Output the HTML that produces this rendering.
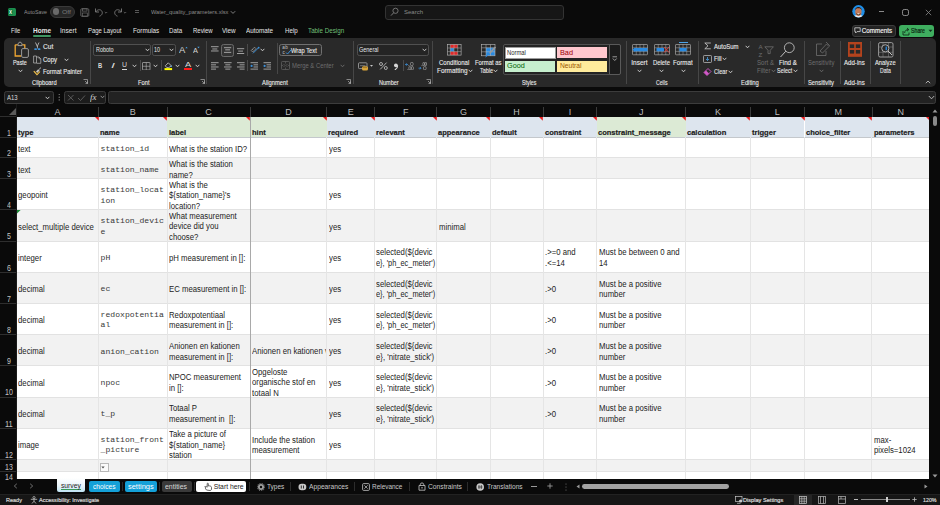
<!DOCTYPE html>
<html><head><meta charset="utf-8"><style>
html,body{margin:0;padding:0;width:940px;height:505px;overflow:hidden;background:#0a0a0a;font-family:"Liberation Sans",sans-serif}
#root{position:relative;width:940px;height:505px;overflow:hidden}
</style></head><body><div id="root">
<div style="position:absolute;left:0px;top:0px;width:940px;height:505px;background:#0a0a0a;"></div><div style="position:absolute;left:8px;top:8px;width:8px;height:8px;background:#1d8f4f;border-radius:1.5px"></div><div style="position:absolute;left:8px;top:9px;width:5px;height:6px;background:#107c41;border-radius:1px"></div><div style="position:absolute;left:50.4px;top:6.2px;width:23px;height:10px;border:0.8px solid #3a3a3a;border-radius:6px;background:#262626"></div><div style="position:absolute;left:53px;top:8.4px;width:6.4px;height:6.4px;border-radius:50%;background:#6a6a6a"></div><svg style="position:absolute;left:80px;top:7.5px;" width="10" height="9" viewBox="0 0 10 9" fill="none"><rect x="0.8" y="0.8" width="8" height="7.4" rx="0.8" stroke="#6e6e6e" stroke-width="0.8"/><rect x="2.6" y="0.8" width="4.4" height="2.3" stroke="#6e6e6e" stroke-width="0.7"/><rect x="2.3" y="5" width="5" height="3.2" stroke="#6e6e6e" stroke-width="0.7"/></svg><svg style="position:absolute;left:94px;top:7px;" width="14" height="10" viewBox="0 0 14 10" fill="none"><path d="M1.5 1.5 V5 H5 M1.8 4.8 C3.2 2.6 6.2 2 7.6 3.8 C9 5.6 8.3 8.2 5.5 9.2" stroke="#7a7a7a" stroke-width="0.9"/><path d="M10.8 5 L12 6.2 L13.2 5" stroke="#7a7a7a" stroke-width="0.7"/></svg><svg style="position:absolute;left:113px;top:7px;" width="14" height="10" viewBox="0 0 14 10" fill="none"><path d="M8.5 1.5 V5 H5 M8.2 4.8 C6.8 2.6 3.8 2 2.4 3.8 C1 5.6 1.7 8.2 4.5 9.2" stroke="#7a7a7a" stroke-width="0.9"/><path d="M10.8 5 L12 6.2 L13.2 5" stroke="#7a7a7a" stroke-width="0.7"/></svg><svg style="position:absolute;left:134px;top:8px;" width="6" height="8" viewBox="0 0 6 8" fill="none"><path d="M1 2.5 H5 M1 4.5 H5" stroke="#7a7a7a" stroke-width="0.7"/></svg><svg style="position:absolute;left:230px;top:10px;" width="6" height="5" viewBox="0 0 6 5" fill="none"><path d="M0.8 1.2 L3 3.4 L5.2 1.2" stroke="#8c8c8c" stroke-width="0.9"/></svg><div style="position:absolute;left:384.5px;top:4.5px;width:177.5px;height:13.5px;border:1px solid #333333;border-radius:3px;background:#161616"></div><svg style="position:absolute;left:390px;top:7px;" width="9" height="10" viewBox="0 0 9 10" fill="none"><circle cx="5.5" cy="3.8" r="2.6" stroke="#7c7c7c" stroke-width="0.9"/><path d="M3.6 5.8 L1 8.6" stroke="#7c7c7c" stroke-width="1"/></svg><svg style="position:absolute;left:851.5px;top:5.2px;" width="13" height="13" viewBox="0 0 13 13" fill="none"><defs><clipPath id="av"><circle cx="6.5" cy="6.3" r="6.2"/></clipPath></defs><g clip-path="url(#av)"><rect width="13" height="13" fill="#1f8ee6"/><ellipse cx="6.4" cy="13" rx="5.5" ry="3.2" fill="#e8ecf0"/><ellipse cx="6.4" cy="6.8" rx="3.2" ry="4.2" fill="#c27a58"/><path d="M3 5.5 C2.8 0.8 10 0.8 9.8 5.5 C9.2 3.6 8.4 3.2 6.4 3.2 C4.4 3.2 3.6 3.6 3 5.5 Z" fill="#2a1a12"/><path d="M4 8 C4.5 11 8.3 11 8.8 8 C8 9.3 4.8 9.3 4 8 Z" fill="#3a2418"/><ellipse cx="6.4" cy="8.8" rx="1.3" ry="0.6" fill="#f0e6e0"/></g></svg><div style="position:absolute;left:878.8px;top:11px;width:5px;height:0.8px;background:#8a8a8a;"></div><div style="position:absolute;left:902px;top:9px;width:4.5px;height:4.5px;border:0.9px solid #8a8a8a;border-radius:2.2px"></div><svg style="position:absolute;left:925px;top:8.5px;" width="7" height="7" viewBox="0 0 7 7" fill="none"><path d="M0.8 0.8 L6.2 6.2 M6.2 0.8 L0.8 6.2" stroke="#8a8a8a" stroke-width="0.8"/></svg><div style="position:absolute;left:33px;top:35.2px;width:18px;height:1.8px;background:#3f9462;border-radius:1px"></div><div style="position:absolute;left:851.5px;top:24.5px;width:42.5px;height:10.5px;border:1px solid #3c3c3c;border-radius:3px;background:#232323"></div><svg style="position:absolute;left:854px;top:27px;" width="7" height="7" viewBox="0 0 7 7" fill="none"><path d="M0.8 0.8 H6.2 V4.6 H3 L1.6 6 V4.6 H0.8 Z" stroke="#d8d8d8" stroke-width="0.8"/></svg><div style="position:absolute;left:899px;top:25px;width:35px;height:11.7px;border-radius:3px;background:#3fae5f"></div><svg style="position:absolute;left:901.5px;top:26.5px;" width="8" height="9" viewBox="0 0 8 9" fill="none"><path d="M1 4 V8 H7 V5.5" stroke="#0c1f12" stroke-width="0.8"/><path d="M2.6 6 C2.8 3.5 4.4 2.6 6.4 2.6 M5 1 L6.8 2.6 L5 4.2" stroke="#0c1f12" stroke-width="0.8"/></svg><svg style="position:absolute;left:928px;top:29px;" width="5" height="4" viewBox="0 0 5 4" fill="none"><path d="M0.5 0.8 L2.5 3 L4.5 0.8 Z" fill="#10301c"/></svg><div style="position:absolute;left:3.7px;top:38px;width:932px;height:48.6px;background:#292929;border-radius:5px"></div><div style="position:absolute;left:89.7px;top:41px;width:0.8px;height:43px;background:#474747;"></div><div style="position:absolute;left:205.6px;top:41px;width:0.8px;height:43px;background:#474747;"></div><div style="position:absolute;left:353.2px;top:41px;width:0.8px;height:43px;background:#474747;"></div><div style="position:absolute;left:432.3px;top:41px;width:0.8px;height:43px;background:#474747;"></div><div style="position:absolute;left:625.5px;top:41px;width:0.8px;height:43px;background:#474747;"></div><div style="position:absolute;left:697.9px;top:41px;width:0.8px;height:43px;background:#474747;"></div><div style="position:absolute;left:803.5px;top:41px;width:0.8px;height:43px;background:#474747;"></div><div style="position:absolute;left:839.8px;top:41px;width:0.8px;height:43px;background:#474747;"></div><div style="position:absolute;left:870.2px;top:41px;width:0.8px;height:43px;background:#474747;"></div><div style="position:absolute;left:900px;top:41px;width:0.8px;height:43px;background:#474747;"></div><svg style="position:absolute;left:13px;top:41px;" width="17" height="18" viewBox="0 0 17 18" fill="none"><path d="M2.2 3.8 H4.8 M9.3 3.8 H11.8 V9 M2.2 3.8 V15 H8" stroke="#f0a732" stroke-width="1.3"/><path d="M5 4.6 V2.5 L7 0.9 L9 2.5 V4.6 Z" stroke="#b8b8b8" stroke-width="0.8"/><rect x="8.6" y="7.6" width="6.8" height="8.8" rx="1.3" fill="#292929" stroke="#9a9a9a" stroke-width="1"/></svg><svg style="position:absolute;left:18.0px;top:68.7px;" width="5" height="4" viewBox="0 0 5 4" fill="none"><path d="M0.9 1.1 L2.5 2.8 L4.1 1.1" stroke="#d8d8d8" stroke-width="0.9" stroke-linejoin="round" stroke-linecap="round"/></svg><svg style="position:absolute;left:33px;top:41.5px;" width="8" height="9" viewBox="0 0 8 9" fill="none"><path d="M2.5 0.5 L4.3 4.5 M6 0.5 L4.2 4.5" stroke="#c8c8c8" stroke-width="0.8"/><rect x="4" y="4" width="0.7" height="2.5" fill="#c8c8c8"/><rect x="1.3" y="6.3" width="2.6" height="1.8" rx="0.5" fill="#3b8fd8"/><rect x="4.8" y="6.3" width="2.6" height="1.8" rx="0.5" fill="#3b8fd8"/></svg><svg style="position:absolute;left:33px;top:54.5px;" width="9" height="9" viewBox="0 0 9 9" fill="none"><path d="M0.6 1 H3.5 V8 H0.6 Z" stroke="#bdbdbd" stroke-width="0.7"/><path d="M3.5 2 H6 L7.8 3.8 V8.3 H3.5" stroke="#bdbdbd" stroke-width="0.7"/><path d="M6 2 V3.8 H7.8" stroke="#bdbdbd" stroke-width="0.5"/></svg><svg style="position:absolute;left:63.900000000000006px;top:57.5px;" width="5" height="4" viewBox="0 0 5 4" fill="none"><path d="M0.9 1.1 L2.5 2.8 L4.1 1.1" stroke="#d8d8d8" stroke-width="0.9" stroke-linejoin="round" stroke-linecap="round"/></svg><svg style="position:absolute;left:33px;top:67px;" width="9" height="9" viewBox="0 0 9 9" fill="none"><path d="M0.8 4.2 L4 7.8 L7 4.5" stroke="#f2c14e" stroke-width="1.1" fill="#5a4a20"/><path d="M3 4.5 L5.2 2.2 L6.6 3.6 L4.4 5.8 Z" fill="#c8c8c8"/><path d="M5.8 2.6 L8 0.6" stroke="#c8c8c8" stroke-width="0.9"/></svg><svg style="position:absolute;left:83.0px;top:79.0px;" width="5" height="5" viewBox="0 0 5 5" fill="none"><path d="M0.5 0.5 H4.5 V4.5 M2 2 L4.5 4.5 M4.5 2.5 V4.5 H2.5" stroke="#b0b0b0" stroke-width="0.7"/></svg><div style="position:absolute;left:93.3px;top:44.4px;width:55.8px;height:9.5px;border:0.8px solid #505050;border-radius:2.2px;background:#242424"></div><svg style="position:absolute;left:144.5px;top:48px;" width="5" height="4" viewBox="0 0 5 4" fill="none"><path d="M0.9 1.1 L2.5 2.8 L4.1 1.1" stroke="#d8d8d8" stroke-width="0.9" stroke-linejoin="round" stroke-linecap="round"/></svg><div style="position:absolute;left:152px;top:44.4px;width:21.8px;height:9.5px;border:0.8px solid #505050;border-radius:2.2px;background:#242424"></div><svg style="position:absolute;left:169.3px;top:48px;" width="5" height="4" viewBox="0 0 5 4" fill="none"><path d="M0.9 1.1 L2.5 2.8 L4.1 1.1" stroke="#d8d8d8" stroke-width="0.9" stroke-linejoin="round" stroke-linecap="round"/></svg><svg style="position:absolute;left:184.8px;top:45.5px;" width="3" height="3" viewBox="0 0 3 3" fill="none"><path d="M0.3 2.2 L1.5 0.8 L2.7 2.2 Z" fill="#4aa3e8"/></svg><svg style="position:absolute;left:197.2px;top:45.8px;" width="3" height="3" viewBox="0 0 3 3" fill="none"><path d="M0.3 0.8 L1.5 2.2 L2.7 0.8 Z" fill="#4aa3e8"/></svg><div style="position:absolute;left:122px;top:68.8px;width:5px;height:0.7px;background:#d8d8d8;"></div><svg style="position:absolute;left:132.0px;top:63.5px;" width="5" height="4" viewBox="0 0 5 4" fill="none"><path d="M0.9 1.1 L2.5 2.8 L4.1 1.1" stroke="#d8d8d8" stroke-width="0.9" stroke-linejoin="round" stroke-linecap="round"/></svg><div style="position:absolute;left:139.6px;top:60px;width:0.7px;height:11px;background:#4a4a4a;"></div><svg style="position:absolute;left:142px;top:61.5px;" width="8.5" height="8.5" viewBox="0 0 8.5 8.5" fill="none"><rect x="0.5" y="0.5" width="7.5" height="7.5" rx="0.5" stroke="#b8b8b8" stroke-width="0.7"/><path d="M4.25 0.5 V8 M0.5 4.25 H8" stroke="#b8b8b8" stroke-width="0.6"/></svg><div style="position:absolute;left:161.3px;top:60px;width:0.7px;height:11px;background:#4a4a4a;"></div><svg style="position:absolute;left:152.5px;top:63.5px;" width="5" height="4" viewBox="0 0 5 4" fill="none"><path d="M0.9 1.1 L2.5 2.8 L4.1 1.1" stroke="#d8d8d8" stroke-width="0.9" stroke-linejoin="round" stroke-linecap="round"/></svg><svg style="position:absolute;left:164px;top:60.5px;" width="9" height="10" viewBox="0 0 9 10" fill="none"><path d="M1.3 4.8 L4.3 1.8 L7.3 4.8 L4.8 6.6 H2.8 Z" stroke="#d0d0d0" stroke-width="0.8"/><path d="M7 4.5 L7.8 6" stroke="#4aa3e8" stroke-width="0.9"/><rect x="0.5" y="7.1" width="7.6" height="2" fill="#ffff00"/></svg><svg style="position:absolute;left:174.5px;top:63.5px;" width="5" height="4" viewBox="0 0 5 4" fill="none"><path d="M0.9 1.1 L2.5 2.8 L4.1 1.1" stroke="#d8d8d8" stroke-width="0.9" stroke-linejoin="round" stroke-linecap="round"/></svg><div style="position:absolute;left:184px;top:67.6px;width:8px;height:2.1px;background:#ff1a1a;"></div><svg style="position:absolute;left:194.6px;top:63.5px;" width="5" height="4" viewBox="0 0 5 4" fill="none"><path d="M0.9 1.1 L2.5 2.8 L4.1 1.1" stroke="#d8d8d8" stroke-width="0.9" stroke-linejoin="round" stroke-linecap="round"/></svg><svg style="position:absolute;left:200.0px;top:79.0px;" width="5" height="5" viewBox="0 0 5 5" fill="none"><path d="M0.5 0.5 H4.5 V4.5 M2 2 L4.5 4.5 M4.5 2.5 V4.5 H2.5" stroke="#b0b0b0" stroke-width="0.7"/></svg><svg style="position:absolute;left:211px;top:45.5px;" width="8" height="6" viewBox="0 0 8 6" fill="none"><rect x="0" y="0.4" width="7.6" height="0.75" fill="#c8c8c8"/><rect x="1.3" y="2.6" width="5" height="0.75" fill="#c8c8c8"/><rect x="0" y="4.6" width="7.6" height="0.75" fill="#c8c8c8"/></svg><div style="position:absolute;left:221.2px;top:44px;width:11.3px;height:10.8px;border:0.9px solid #6a6a6a;border-radius:2.5px;background:#333333"></div><svg style="position:absolute;left:224px;top:46.5px;" width="8" height="6" viewBox="0 0 8 6" fill="none"><rect x="0" y="0.4" width="7.2" height="0.75" fill="#c8c8c8"/><rect x="1.2" y="2.5" width="4.8" height="0.75" fill="#c8c8c8"/><rect x="0" y="4.9" width="7.2" height="0.75" fill="#c8c8c8"/></svg><svg style="position:absolute;left:237px;top:48.3px;" width="8" height="6" viewBox="0 0 8 6" fill="none"><rect x="0" y="0.4" width="7.2" height="0.75" fill="#c8c8c8"/><rect x="1.2" y="2.7" width="4.8" height="0.75" fill="#c8c8c8"/><rect x="0" y="5.1" width="7.2" height="0.75" fill="#c8c8c8"/></svg><div style="position:absolute;left:247.2px;top:44px;width:0.7px;height:11.6px;background:#4a4a4a;"></div><svg style="position:absolute;left:250px;top:45px;" width="10" height="9" viewBox="0 0 10 9" fill="none"><path d="M1.2 5.5 L4.5 2.2 L6 3.7 L2.7 7 Z M2.2 4.2 L3.2 5.2" stroke="#a8a8a8" stroke-width="0.7"/><path d="M3 8.3 L8.8 2.5" stroke="#3b8fd8" stroke-width="1"/><circle cx="8.6" cy="2.7" r="0.9" fill="#3b8fd8"/></svg><svg style="position:absolute;left:259.8px;top:48px;" width="5" height="4" viewBox="0 0 5 4" fill="none"><path d="M0.9 1.1 L2.5 2.8 L4.1 1.1" stroke="#d8d8d8" stroke-width="0.9" stroke-linejoin="round" stroke-linecap="round"/></svg><svg style="position:absolute;left:211px;top:61.5px;" width="8" height="8" viewBox="0 0 8 8" fill="none"><rect x="0" y="0.4" width="7.6" height="0.75" fill="#c8c8c8"/><rect x="0" y="2.5" width="5" height="0.75" fill="#c8c8c8"/><rect x="0" y="4.6" width="7.6" height="0.75" fill="#c8c8c8"/><rect x="0" y="6.7" width="5" height="0.75" fill="#c8c8c8"/></svg><svg style="position:absolute;left:224px;top:61.5px;" width="8" height="8" viewBox="0 0 8 8" fill="none"><rect x="0" y="0.4" width="7.6" height="0.75" fill="#c8c8c8"/><rect x="1.3" y="2.5" width="5" height="0.75" fill="#c8c8c8"/><rect x="0" y="4.6" width="7.6" height="0.75" fill="#c8c8c8"/><rect x="1.3" y="6.7" width="5" height="0.75" fill="#c8c8c8"/></svg><svg style="position:absolute;left:237px;top:61.5px;" width="8" height="8" viewBox="0 0 8 8" fill="none"><rect x="0" y="0.4" width="7.6" height="0.75" fill="#c8c8c8"/><rect x="2.6" y="2.5" width="5" height="0.75" fill="#c8c8c8"/><rect x="0" y="4.6" width="7.6" height="0.75" fill="#c8c8c8"/><rect x="2.6" y="6.7" width="5" height="0.75" fill="#c8c8c8"/></svg><div style="position:absolute;left:247.2px;top:59.6px;width:0.7px;height:11.6px;background:#4a4a4a;"></div><svg style="position:absolute;left:250px;top:61.5px;" width="9" height="8" viewBox="0 0 9 8" fill="none"><rect x="0.5" y="0.4" width="7.5" height="0.75" fill="#c8c8c8"/><rect x="3.5" y="2.5" width="4.5" height="0.75" fill="#c8c8c8"/><rect x="3.5" y="4.6" width="4.5" height="0.75" fill="#c8c8c8"/><rect x="0.5" y="6.7" width="7.5" height="0.75" fill="#c8c8c8"/><circle cx="1.6" cy="3.9" r="1.1" fill="#3b8fd8"/></svg><svg style="position:absolute;left:263px;top:61.5px;" width="9" height="8" viewBox="0 0 9 8" fill="none"><rect x="0.5" y="0.4" width="7.5" height="0.75" fill="#c8c8c8"/><rect x="3.5" y="2.5" width="4.5" height="0.75" fill="#c8c8c8"/><rect x="3.5" y="4.6" width="4.5" height="0.75" fill="#c8c8c8"/><rect x="0.5" y="6.7" width="7.5" height="0.75" fill="#c8c8c8"/><circle cx="1.6" cy="3.9" r="1.1" fill="#3b8fd8"/></svg><div style="position:absolute;left:276.6px;top:43.4px;width:0.7px;height:30.2px;background:#474747;"></div><div style="position:absolute;left:279.1px;top:44.4px;width:40.5px;height:9.8px;border:0.8px solid #707070;border-radius:2.5px;background:#2e2e2e"></div><svg style="position:absolute;left:281.5px;top:45px;" width="10" height="10" viewBox="0 0 10 10" fill="none"><text x="0.3" y="4.3" font-family="Liberation Sans" font-size="4.6" fill="#c8c8c8">a</text><text x="3.3" y="4.3" font-family="Liberation Sans" font-size="4.6" fill="#c8c8c8">b</text><text x="0.5" y="8.8" font-family="Liberation Sans" font-size="4.6" fill="#c8c8c8">c</text><path d="M4 7.5 L5.5 9 L9 5" stroke="#3b8fd8" stroke-width="1"/></svg><svg style="position:absolute;left:280.5px;top:61px;" width="9" height="9" viewBox="0 0 9 9" fill="none"><rect x="0.5" y="0.5" width="8" height="8" rx="0.8" stroke="#5e5e5e" stroke-width="0.8"/><path d="M4.5 0.5 V2.5 M4.5 6.5 V8.5 M0.5 4.5 H2 M7 4.5 H8.5 M2.5 3 L4 4.5 L2.5 6 M6.5 3 L5 4.5 L6.5 6" stroke="#5e5e5e" stroke-width="0.7"/></svg><svg style="position:absolute;left:339.6px;top:63.8px;" width="5" height="4" viewBox="0 0 5 4" fill="none"><path d="M0.9 1.1 L2.5 2.8 L4.1 1.1" stroke="#6e6e6e" stroke-width="0.9" stroke-linejoin="round" stroke-linecap="round"/></svg><svg style="position:absolute;left:345.6px;top:79.0px;" width="5" height="5" viewBox="0 0 5 5" fill="none"><path d="M0.5 0.5 H4.5 V4.5 M2 2 L4.5 4.5 M4.5 2.5 V4.5 H2.5" stroke="#b0b0b0" stroke-width="0.7"/></svg><div style="position:absolute;left:356.6px;top:44.4px;width:70.2px;height:9.8px;border:0.8px solid #505050;border-radius:2.2px;background:#242424"></div><svg style="position:absolute;left:422.0px;top:48px;" width="5" height="4" viewBox="0 0 5 4" fill="none"><path d="M0.9 1.1 L2.5 2.8 L4.1 1.1" stroke="#d8d8d8" stroke-width="0.9" stroke-linejoin="round" stroke-linecap="round"/></svg><svg style="position:absolute;left:357.5px;top:61.5px;" width="11" height="9" viewBox="0 0 11 9" fill="none"><rect x="0.5" y="0.8" width="8.5" height="5.8" rx="0.8" stroke="#a8a8a8" stroke-width="0.8"/><path d="M2 3.7 H7.5" stroke="#a8a8a8" stroke-width="0.6"/><rect x="4" y="4.2" width="6" height="4.2" rx="1.5" fill="#d9a53a"/><path d="M5 5.6 H9" stroke="#6a4a10" stroke-width="0.5"/></svg><svg style="position:absolute;left:370.4px;top:65px;" width="3" height="2" viewBox="0 0 3 2" fill="none"><path d="M0 0 H3 L1.5 1.8 Z" fill="#c8c8c8"/></svg><svg style="position:absolute;left:378.5px;top:61.8px;" width="9" height="8" viewBox="0 0 9 8" fill="none"><circle cx="2" cy="2" r="1.5" stroke="#b8b8b8" stroke-width="0.9"/><circle cx="6.8" cy="6" r="1.5" stroke="#b8b8b8" stroke-width="0.9"/><path d="M7.6 0.6 L1.2 7.4" stroke="#b8b8b8" stroke-width="0.9"/></svg><svg style="position:absolute;left:393px;top:62.5px;" width="6" height="7" viewBox="0 0 6 7" fill="none"><circle cx="2.9" cy="2.3" r="1.9" fill="#d8d8d8"/><path d="M4.6 2.5 C4.7 4.6 3.8 6 1.8 6.8" stroke="#d8d8d8" stroke-width="1.1"/></svg><div style="position:absolute;left:402.9px;top:59.8px;width:0.7px;height:11.5px;background:#4a4a4a;"></div><svg style="position:absolute;left:405.3px;top:61.8px;" width="9" height="8.5" viewBox="0 0 9 8.5" fill="none"><path d="M0.5 2.5 H3 M1.6 1.3 L0.5 2.5 L1.6 3.7" stroke="#3b8fd8" stroke-width="0.8"/><rect x="3.5" y="3.3" width="0.8" height="0.8" fill="#b8b8b8"/><rect x="5.5" y="0.4" width="2.6" height="3.2" rx="1" stroke="#b8b8b8" stroke-width="0.6"/><rect x="2.6" y="7" width="0.8" height="0.8" fill="#b8b8b8"/><rect x="3.9" y="4.6" width="2" height="3.2" rx="0.9" stroke="#b8b8b8" stroke-width="0.6"/><rect x="6.4" y="4.6" width="2" height="3.2" rx="0.9" stroke="#b8b8b8" stroke-width="0.6"/></svg><svg style="position:absolute;left:418.2px;top:61.8px;" width="9" height="8.5" viewBox="0 0 9 8.5" fill="none"><path d="M0.5 6.2 H3 M1.9 5 L3 6.2 L1.9 7.4" stroke="#3b8fd8" stroke-width="0.8"/><rect x="3.6" y="3.3" width="0.8" height="0.8" fill="#b8b8b8"/><rect x="4.9" y="0.4" width="1.6" height="3.2" rx="0.7" stroke="#b8b8b8" stroke-width="0.6"/><rect x="6.9" y="0.4" width="1.6" height="3.2" rx="0.7" stroke="#b8b8b8" stroke-width="0.6"/><rect x="5.5" y="4.6" width="2.6" height="3.2" rx="1" stroke="#b8b8b8" stroke-width="0.6"/></svg><svg style="position:absolute;left:425.6px;top:79.0px;" width="5" height="5" viewBox="0 0 5 5" fill="none"><path d="M0.5 0.5 H4.5 V4.5 M2 2 L4.5 4.5 M4.5 2.5 V4.5 H2.5" stroke="#b0b0b0" stroke-width="0.7"/></svg><svg style="position:absolute;left:446.8px;top:44px;" width="15" height="12" viewBox="0 0 15 12" fill="none"><rect x="3.3" y="0.5" width="7.4" height="3.4" fill="#e02828"/><rect x="3.3" y="4.1" width="3.6" height="3.4" fill="#2a8ae0"/><rect x="3.3" y="7.7" width="7.4" height="3.4" fill="#e02828"/><rect x="0.5" y="0.5" width="13.6" height="10.6" stroke="#bdbdbd" stroke-width="0.6"/><path d="M3.3 0.5 V11.1 M7 0.5 V11.1 M10.7 0.5 V11.1 M0.5 4 H14.1 M0.5 7.6 H14.1" stroke="#bdbdbd" stroke-width="0.45"/></svg><svg style="position:absolute;left:467.7px;top:68.8px;" width="5" height="4" viewBox="0 0 5 4" fill="none"><path d="M0.9 1.1 L2.5 2.8 L4.1 1.1" stroke="#d8d8d8" stroke-width="0.9" stroke-linejoin="round" stroke-linecap="round"/></svg><svg style="position:absolute;left:480.5px;top:43.5px;" width="16" height="15" viewBox="0 0 16 15" fill="none"><rect x="5" y="3.7" width="9" height="8" fill="#2a8ae0"/><rect x="0.5" y="0.5" width="13.5" height="11.3" stroke="#bdbdbd" stroke-width="0.6"/><path d="M5 0.5 V11.8 M9.5 0.5 V11.8 M0.5 3.8 H14 M0.5 7.8 H14" stroke="#bdbdbd" stroke-width="0.5"/><path d="M14.5 3 L8.5 9.5" stroke="#9a9a9a" stroke-width="1.6"/><path d="M8.8 9.2 L6 12.2 L4 13.8 L5.4 11.3 L8 8.6 Z" fill="#2a8ae0"/></svg><svg style="position:absolute;left:493.0px;top:68.8px;" width="5" height="4" viewBox="0 0 5 4" fill="none"><path d="M0.9 1.1 L2.5 2.8 L4.1 1.1" stroke="#d8d8d8" stroke-width="0.9" stroke-linejoin="round" stroke-linecap="round"/></svg><div style="position:absolute;left:503px;top:44.4px;width:116.4px;height:28.8px;border:0.9px solid #505050;border-radius:2px;background:#232323"></div><div style="position:absolute;left:505.2px;top:46.6px;width:48.5px;height:10.4px;background:#ffffff;border:0.6px solid #9c9c9c"></div><div style="position:absolute;left:557.4px;top:46.6px;width:49.4px;height:11px;background:#ffc7ce"></div><div style="position:absolute;left:505.2px;top:60.5px;width:49.7px;height:11px;background:#c6efce"></div><div style="position:absolute;left:557.4px;top:60.5px;width:49.4px;height:11px;background:#ffeb9c"></div><div style="position:absolute;left:608.5px;top:44.4px;width:10.9px;height:28.8px;border:0.9px solid #5a5a5a;border-radius:0 2px 2px 0;background:#1c1c1c"></div><svg style="position:absolute;left:611.5px;top:56px;" width="6" height="6" viewBox="0 0 6 6" fill="none"><path d="M0.5 0.8 H5 M0.8 2.5 L2.75 4.5 L4.7 2.5" stroke="#d0d0d0" stroke-width="0.7"/></svg><svg style="position:absolute;left:632px;top:44px;" width="16" height="12" viewBox="0 0 16 12" fill="none"><rect x="0.5" y="0.5" width="15" height="10.3" rx="0.6" stroke="#bdbdbd" stroke-width="0.6"/><path d="M4.25 0.5 V10.8 M8 0.5 V10.8 M11.75 0.5 V10.8 M0.5 3.8 H15.5 M0.5 7.4 H15.5" stroke="#bdbdbd" stroke-width="0.45"/><rect x="2.5" y="4" width="13" height="3.3" fill="#2a8ae0"/><path d="M0.3 5.65 L3 3.4 V7.9 Z" fill="#2a8ae0"/></svg><svg style="position:absolute;left:637.0px;top:68.7px;" width="5" height="4" viewBox="0 0 5 4" fill="none"><path d="M0.9 1.1 L2.5 2.8 L4.1 1.1" stroke="#d8d8d8" stroke-width="0.9" stroke-linejoin="round" stroke-linecap="round"/></svg><svg style="position:absolute;left:653.5px;top:44px;" width="16" height="12" viewBox="0 0 16 12" fill="none"><rect x="0.5" y="0.5" width="15" height="10.3" rx="0.6" stroke="#bdbdbd" stroke-width="0.6"/><path d="M4.25 0.5 V10.8 M8 0.5 V10.8 M11.75 0.5 V10.8 M0.5 3.8 H15.5 M0.5 7.4 H15.5" stroke="#bdbdbd" stroke-width="0.45"/><rect x="2.5" y="4" width="7.5" height="3.3" fill="#2a8ae0"/><path d="M10 3 L15 8.6 M15 3 L10 8.6" stroke="#e03c3c" stroke-width="0.9"/></svg><svg style="position:absolute;left:658.8px;top:68.7px;" width="5" height="4" viewBox="0 0 5 4" fill="none"><path d="M0.9 1.1 L2.5 2.8 L4.1 1.1" stroke="#d8d8d8" stroke-width="0.9" stroke-linejoin="round" stroke-linecap="round"/></svg><svg style="position:absolute;left:675px;top:44px;" width="16" height="12" viewBox="0 0 16 12" fill="none"><rect x="0.5" y="0.5" width="15" height="10.3" rx="0.6" stroke="#bdbdbd" stroke-width="0.6"/><path d="M4.25 0.5 V10.8 M8 0.5 V10.8 M11.75 0.5 V10.8 M0.5 3.8 H15.5 M0.5 7.4 H15.5" stroke="#bdbdbd" stroke-width="0.45"/><rect x="4.4" y="4" width="7.2" height="3.3" fill="#2a8ae0"/></svg><div style="position:absolute;left:679px;top:42px;width:9px;height:0.8px;background:#4aa3e8;"></div><svg style="position:absolute;left:680.5px;top:68.7px;" width="5" height="4" viewBox="0 0 5 4" fill="none"><path d="M0.9 1.1 L2.5 2.8 L4.1 1.1" stroke="#d8d8d8" stroke-width="0.9" stroke-linejoin="round" stroke-linecap="round"/></svg><svg style="position:absolute;left:703.5px;top:42px;" width="8" height="8" viewBox="0 0 8 8" fill="none"><path d="M6.8 1 H0.8 L4 3.8 L0.8 6.8 H6.8" stroke="#d0d0d0" stroke-width="0.8" stroke-linejoin="miter"/></svg><svg style="position:absolute;left:745.1px;top:44.8px;" width="5" height="4" viewBox="0 0 5 4" fill="none"><path d="M0.9 1.1 L2.5 2.8 L4.1 1.1" stroke="#d8d8d8" stroke-width="0.9" stroke-linejoin="round" stroke-linecap="round"/></svg><svg style="position:absolute;left:703px;top:54.8px;" width="9" height="8" viewBox="0 0 9 8" fill="none"><rect x="0.5" y="0.5" width="8" height="7" rx="0.8" stroke="#c8c8c8" stroke-width="0.7"/><path d="M4.5 2 V5.5 M3 4 L4.5 5.5 L6 4" stroke="#4aa3e8" stroke-width="0.8"/></svg><svg style="position:absolute;left:721.8px;top:57px;" width="5" height="4" viewBox="0 0 5 4" fill="none"><path d="M0.9 1.1 L2.5 2.8 L4.1 1.1" stroke="#d8d8d8" stroke-width="0.9" stroke-linejoin="round" stroke-linecap="round"/></svg><svg style="position:absolute;left:703px;top:67px;" width="9" height="9" viewBox="0 0 9 9" fill="none"><path d="M1 5.5 L5 1.5 L8 4.5 L4 8.5 Z" stroke="#d259c8" stroke-width="0.9"/><path d="M1 5.5 L3 3.5 L6 6.5 L4 8.5 Z" fill="#d259c8"/></svg><svg style="position:absolute;left:727.8px;top:69.5px;" width="5" height="4" viewBox="0 0 5 4" fill="none"><path d="M0.9 1.1 L2.5 2.8 L4.1 1.1" stroke="#d8d8d8" stroke-width="0.9" stroke-linejoin="round" stroke-linecap="round"/></svg><svg style="position:absolute;left:757.5px;top:42.5px;" width="17" height="15" viewBox="0 0 17 15" fill="none"><text x="0.6" y="6" font-family="Liberation Sans" font-size="6.2" fill="#6e6e6e">A</text><text x="0.6" y="13.5" font-family="Liberation Sans" font-size="6.2" fill="#6e6e6e">Z</text><path d="M6.8 3.8 H15.4 L12.2 7.3 V10.6 H10 V7.3 Z" stroke="#6e6e6e" stroke-width="0.8"/></svg><svg style="position:absolute;left:770.5px;top:68.8px;" width="5" height="4" viewBox="0 0 5 4" fill="none"><path d="M0.9 1.1 L2.5 2.8 L4.1 1.1" stroke="#6e6e6e" stroke-width="0.9" stroke-linejoin="round" stroke-linecap="round"/></svg><svg style="position:absolute;left:779px;top:41.5px;" width="17" height="16" viewBox="0 0 17 16" fill="none"><circle cx="10.3" cy="5.7" r="4.9" stroke="#d0d0d0" stroke-width="0.8"/><path d="M6.8 9.2 L1.5 15" stroke="#d0d0d0" stroke-width="0.9"/></svg><svg style="position:absolute;left:793.3px;top:68.8px;" width="5" height="4" viewBox="0 0 5 4" fill="none"><path d="M0.9 1.1 L2.5 2.8 L4.1 1.1" stroke="#d8d8d8" stroke-width="0.9" stroke-linejoin="round" stroke-linecap="round"/></svg><svg style="position:absolute;left:814.5px;top:41.2px;" width="16" height="16" viewBox="0 0 16 16" fill="none"><path d="M1.5 3 H7 M1.5 3 V14.5 H11 V10" stroke="#6e6e6e" stroke-width="0.8"/><path d="M5 10 L11.5 3 L14 5.5 L7.5 12 Z" stroke="#6e6e6e" stroke-width="0.8"/><path d="M11 1 L14.8 4.8" stroke="#6e6e6e" stroke-width="0.8"/></svg><svg style="position:absolute;left:818.8px;top:68.7px;" width="5" height="4" viewBox="0 0 5 4" fill="none"><path d="M0.9 1.1 L2.5 2.8 L4.1 1.1" stroke="#6e6e6e" stroke-width="0.9" stroke-linejoin="round" stroke-linecap="round"/></svg><svg style="position:absolute;left:848px;top:42px;" width="14" height="15" viewBox="0 0 14 15" fill="none"><rect x="0" y="0" width="14" height="14.6" fill="#b4431d"/><rect x="1.8" y="2.4" width="4.4" height="3.6" fill="#292929"/><rect x="7.8" y="2.4" width="4.4" height="3.6" fill="#292929"/><rect x="1.8" y="8" width="4.4" height="3.6" fill="#292929"/><rect x="7.8" y="8" width="4.4" height="3.6" fill="#292929"/><rect x="0" y="13" width="14" height="1.6" fill="#b4431d"/></svg><svg style="position:absolute;left:877.5px;top:41.5px;" width="16" height="16" viewBox="0 0 16 16" fill="none"><rect x="0.6" y="0.6" width="14.4" height="14.4" rx="1.5" stroke="#a8a8a8" stroke-width="0.9"/><path d="M0.6 5 H15 M0.6 10.3 H15 M5 0.6 V15 M10.5 0.6 V15" stroke="#8a8a8a" stroke-width="0.5"/><circle cx="7.3" cy="6.3" r="3.6" fill="#292929" stroke="#c8c8c8" stroke-width="0.8"/><rect x="7.6" y="4.6" width="1.3" height="3.6" fill="#2a8ae0"/><path d="M10 9 L14 13" stroke="#c8c8c8" stroke-width="1"/></svg><svg style="position:absolute;left:924.5px;top:80px;" width="6" height="4" viewBox="0 0 6 4" fill="none"><path d="M0.8 3.2 L3 1 L5.2 3.2" stroke="#d0d0d0" stroke-width="0.8"/></svg><div style="position:absolute;left:4.2px;top:91px;width:47.5px;height:10.8px;border:0.9px solid #3c3c3c;border-radius:2.5px;background:#1c1c1c"></div><svg style="position:absolute;left:45.0px;top:95.5px;" width="5" height="4" viewBox="0 0 5 4" fill="none"><path d="M0.9 1.1 L2.5 2.8 L4.1 1.1" stroke="#c8c8c8" stroke-width="0.9900000000000001" stroke-linejoin="round" stroke-linecap="round"/></svg><svg style="position:absolute;left:57.5px;top:93px;" width="3" height="9" viewBox="0 0 3 9" fill="none"><circle cx="1.2" cy="1.5" r="0.6" fill="#9a9a9a"/><circle cx="1.2" cy="4.2" r="0.6" fill="#9a9a9a"/><circle cx="1.2" cy="6.9" r="0.6" fill="#9a9a9a"/></svg><div style="position:absolute;left:64px;top:91px;width:39.6px;height:10.8px;border:0.9px solid #3c3c3c;border-radius:2.5px;background:#1c1c1c"></div><svg style="position:absolute;left:66.5px;top:93.5px;" width="8" height="8" viewBox="0 0 8 8" fill="none"><path d="M1 1 L6.5 6.5 M6.5 1 L1 6.5" stroke="#6a6a6a" stroke-width="0.8"/></svg><svg style="position:absolute;left:76.5px;top:93.5px;" width="9" height="8" viewBox="0 0 9 8" fill="none"><path d="M1 4 L3.5 6.5 L8 1.5" stroke="#6a6a6a" stroke-width="0.8"/></svg><svg style="position:absolute;left:99.5px;top:95.3px;" width="5" height="4" viewBox="0 0 5 4" fill="none"><path d="M0.9 1.1 L2.5 2.8 L4.1 1.1" stroke="#9a9a9a" stroke-width="0.9" stroke-linejoin="round" stroke-linecap="round"/></svg><div style="position:absolute;left:108px;top:91px;width:825.6px;height:10.8px;border:0.9px solid #3c3c3c;border-radius:2.5px;background:#222222"></div><svg style="position:absolute;left:927.5px;top:94.5px;" width="7" height="5" viewBox="0 0 7 5" fill="none"><path d="M0.8 1 L3.5 3.8 L6.2 1" stroke="#c0c0c0" stroke-width="0.9"/></svg><svg style="position:absolute;left:7.5px;top:107px;" width="9" height="9" viewBox="0 0 9 9" fill="none"><path d="M8 1 V8 H1 Z" fill="#5a5a5a"/></svg><div style="position:absolute;left:98.0px;top:107px;width:0.8px;height:9.5px;background:#3a3a3a;"></div><div style="position:absolute;left:166.6px;top:107px;width:0.8px;height:9.5px;background:#3a3a3a;"></div><div style="position:absolute;left:249.79999999999998px;top:107px;width:0.8px;height:9.5px;background:#3a3a3a;"></div><div style="position:absolute;left:326.40000000000003px;top:107px;width:0.8px;height:9.5px;background:#3a3a3a;"></div><div style="position:absolute;left:374.20000000000005px;top:107px;width:0.8px;height:9.5px;background:#3a3a3a;"></div><div style="position:absolute;left:436.40000000000003px;top:107px;width:0.8px;height:9.5px;background:#3a3a3a;"></div><div style="position:absolute;left:489.8px;top:107px;width:0.8px;height:9.5px;background:#3a3a3a;"></div><div style="position:absolute;left:542.6px;top:107px;width:0.8px;height:9.5px;background:#3a3a3a;"></div><div style="position:absolute;left:596.4px;top:107px;width:0.8px;height:9.5px;background:#3a3a3a;"></div><div style="position:absolute;left:685.4px;top:107px;width:0.8px;height:9.5px;background:#3a3a3a;"></div><div style="position:absolute;left:749.8000000000001px;top:107px;width:0.8px;height:9.5px;background:#3a3a3a;"></div><div style="position:absolute;left:804.1px;top:107px;width:0.8px;height:9.5px;background:#3a3a3a;"></div><div style="position:absolute;left:871.5px;top:107px;width:0.8px;height:9.5px;background:#3a3a3a;"></div><div style="position:absolute;left:929.0px;top:107px;width:0.8px;height:9.5px;background:#3a3a3a;"></div><div style="position:absolute;left:16.5px;top:116.5px;width:912.9px;height:362.3px;background:#ffffff;"></div><div style="position:absolute;left:16.5px;top:157.9px;width:912.9px;height:20.69999999999999px;background:#f2f2f2;"></div><div style="position:absolute;left:16.5px;top:209.79999999999998px;width:912.9px;height:31.200000000000017px;background:#f2f2f2;"></div><div style="position:absolute;left:16.5px;top:272.2px;width:912.9px;height:31.19999999999999px;background:#f2f2f2;"></div><div style="position:absolute;left:16.5px;top:334.6px;width:912.9px;height:31.199999999999932px;background:#f2f2f2;"></div><div style="position:absolute;left:16.5px;top:397.0px;width:912.9px;height:31.19999999999999px;background:#f2f2f2;"></div><div style="position:absolute;left:16.5px;top:459.4px;width:912.9px;height:11.800000000000011px;background:#f2f2f2;"></div><div style="position:absolute;left:16.5px;top:116.5px;width:81.9px;height:20.80000000000001px;background:#dde5ee;"></div><div style="position:absolute;left:98.4px;top:116.5px;width:68.6px;height:20.80000000000001px;background:#dde5ee;"></div><div style="position:absolute;left:167px;top:116.5px;width:83.19999999999999px;height:20.80000000000001px;background:#dcead5;"></div><div style="position:absolute;left:250.2px;top:116.5px;width:76.60000000000002px;height:20.80000000000001px;background:#dcead5;"></div><div style="position:absolute;left:326.8px;top:116.5px;width:47.80000000000001px;height:20.80000000000001px;background:#dde5ee;"></div><div style="position:absolute;left:374.6px;top:116.5px;width:62.19999999999999px;height:20.80000000000001px;background:#dde5ee;"></div><div style="position:absolute;left:436.8px;top:116.5px;width:53.39999999999998px;height:20.80000000000001px;background:#dde5ee;"></div><div style="position:absolute;left:490.2px;top:116.5px;width:52.80000000000001px;height:20.80000000000001px;background:#dde5ee;"></div><div style="position:absolute;left:543px;top:116.5px;width:53.799999999999955px;height:20.80000000000001px;background:#dde5ee;"></div><div style="position:absolute;left:596.8px;top:116.5px;width:89.0px;height:20.80000000000001px;background:#dcead5;"></div><div style="position:absolute;left:685.8px;top:116.5px;width:64.40000000000009px;height:20.80000000000001px;background:#dde5ee;"></div><div style="position:absolute;left:750.2px;top:116.5px;width:54.299999999999955px;height:20.80000000000001px;background:#dde5ee;"></div><div style="position:absolute;left:804.5px;top:116.5px;width:67.39999999999998px;height:20.80000000000001px;background:#dde5ee;"></div><div style="position:absolute;left:871.9px;top:116.5px;width:57.5px;height:20.80000000000001px;background:#dde5ee;"></div><div style="position:absolute;left:16.5px;top:136.9px;width:912.9px;height:1px;background:#c4c8cc;"></div><div style="position:absolute;left:16.5px;top:157.4px;width:912.9px;height:1px;background:#e2e2e2;"></div><div style="position:absolute;left:16.5px;top:178.1px;width:912.9px;height:1px;background:#e2e2e2;"></div><div style="position:absolute;left:16.5px;top:209.29999999999998px;width:912.9px;height:1px;background:#e2e2e2;"></div><div style="position:absolute;left:16.5px;top:240.5px;width:912.9px;height:1px;background:#e2e2e2;"></div><div style="position:absolute;left:16.5px;top:271.7px;width:912.9px;height:1px;background:#e2e2e2;"></div><div style="position:absolute;left:16.5px;top:302.9px;width:912.9px;height:1px;background:#e2e2e2;"></div><div style="position:absolute;left:16.5px;top:334.1px;width:912.9px;height:1px;background:#e2e2e2;"></div><div style="position:absolute;left:16.5px;top:365.29999999999995px;width:912.9px;height:1px;background:#e2e2e2;"></div><div style="position:absolute;left:16.5px;top:396.5px;width:912.9px;height:1px;background:#e2e2e2;"></div><div style="position:absolute;left:16.5px;top:427.7px;width:912.9px;height:1px;background:#e2e2e2;"></div><div style="position:absolute;left:16.5px;top:458.9px;width:912.9px;height:1px;background:#e2e2e2;"></div><div style="position:absolute;left:16.5px;top:470.7px;width:912.9px;height:1px;background:#e2e2e2;"></div><div style="position:absolute;left:97.9px;top:137.3px;width:1px;height:341.5px;background:#e5e5e5;"></div><div style="position:absolute;left:166.5px;top:137.3px;width:1px;height:341.5px;background:#e5e5e5;"></div><div style="position:absolute;left:249.7px;top:116.5px;width:1px;height:362.3px;background:#a9a9a9;"></div><div style="position:absolute;left:326.3px;top:137.3px;width:1px;height:341.5px;background:#e5e5e5;"></div><div style="position:absolute;left:374.1px;top:137.3px;width:1px;height:341.5px;background:#e5e5e5;"></div><div style="position:absolute;left:436.3px;top:137.3px;width:1px;height:341.5px;background:#e5e5e5;"></div><div style="position:absolute;left:489.7px;top:137.3px;width:1px;height:341.5px;background:#e5e5e5;"></div><div style="position:absolute;left:542.5px;top:137.3px;width:1px;height:341.5px;background:#e5e5e5;"></div><div style="position:absolute;left:596.3px;top:137.3px;width:1px;height:341.5px;background:#e5e5e5;"></div><div style="position:absolute;left:685.3px;top:137.3px;width:1px;height:341.5px;background:#e5e5e5;"></div><div style="position:absolute;left:749.7px;top:137.3px;width:1px;height:341.5px;background:#e5e5e5;"></div><div style="position:absolute;left:804.0px;top:137.3px;width:1px;height:341.5px;background:#e5e5e5;"></div><div style="position:absolute;left:871.4px;top:137.3px;width:1px;height:341.5px;background:#e5e5e5;"></div><svg style="position:absolute;left:94.60000000000001px;top:116.5px;" width="4" height="4" viewBox="0 0 4 4" fill="none"><path d="M0 0 H3.8 V3.8 Z" fill="#e81e1e"/></svg><svg style="position:absolute;left:163.2px;top:116.5px;" width="4" height="4" viewBox="0 0 4 4" fill="none"><path d="M0 0 H3.8 V3.8 Z" fill="#e81e1e"/></svg><svg style="position:absolute;left:246.39999999999998px;top:116.5px;" width="4" height="4" viewBox="0 0 4 4" fill="none"><path d="M0 0 H3.8 V3.8 Z" fill="#e81e1e"/></svg><svg style="position:absolute;left:323.0px;top:116.5px;" width="4" height="4" viewBox="0 0 4 4" fill="none"><path d="M0 0 H3.8 V3.8 Z" fill="#e81e1e"/></svg><svg style="position:absolute;left:370.8px;top:116.5px;" width="4" height="4" viewBox="0 0 4 4" fill="none"><path d="M0 0 H3.8 V3.8 Z" fill="#e81e1e"/></svg><svg style="position:absolute;left:433.0px;top:116.5px;" width="4" height="4" viewBox="0 0 4 4" fill="none"><path d="M0 0 H3.8 V3.8 Z" fill="#e81e1e"/></svg><svg style="position:absolute;left:486.4px;top:116.5px;" width="4" height="4" viewBox="0 0 4 4" fill="none"><path d="M0 0 H3.8 V3.8 Z" fill="#e81e1e"/></svg><svg style="position:absolute;left:539.2px;top:116.5px;" width="4" height="4" viewBox="0 0 4 4" fill="none"><path d="M0 0 H3.8 V3.8 Z" fill="#e81e1e"/></svg><svg style="position:absolute;left:593.0px;top:116.5px;" width="4" height="4" viewBox="0 0 4 4" fill="none"><path d="M0 0 H3.8 V3.8 Z" fill="#e81e1e"/></svg><svg style="position:absolute;left:682.0px;top:116.5px;" width="4" height="4" viewBox="0 0 4 4" fill="none"><path d="M0 0 H3.8 V3.8 Z" fill="#e81e1e"/></svg><svg style="position:absolute;left:746.4000000000001px;top:116.5px;" width="4" height="4" viewBox="0 0 4 4" fill="none"><path d="M0 0 H3.8 V3.8 Z" fill="#e81e1e"/></svg><svg style="position:absolute;left:800.7px;top:116.5px;" width="4" height="4" viewBox="0 0 4 4" fill="none"><path d="M0 0 H3.8 V3.8 Z" fill="#e81e1e"/></svg><svg style="position:absolute;left:868.1px;top:116.5px;" width="4" height="4" viewBox="0 0 4 4" fill="none"><path d="M0 0 H3.8 V3.8 Z" fill="#e81e1e"/></svg><svg style="position:absolute;left:925.6px;top:116.5px;" width="4" height="4" viewBox="0 0 4 4" fill="none"><path d="M0 0 H3.8 V3.8 Z" fill="#e81e1e"/></svg><svg style="position:absolute;left:16.5px;top:209.6px;" width="4" height="4" viewBox="0 0 4 4" fill="none"><path d="M0 0 H3.6 L0 3.6 Z" fill="#1e8c3a"/></svg><div style="position:absolute;left:0px;top:116.0px;width:16.5px;height:1px;background:#2e2e2e;"></div><div style="position:absolute;left:0px;top:136.9px;width:16.5px;height:1px;background:#2e2e2e;"></div><div style="position:absolute;left:0px;top:157.4px;width:16.5px;height:1px;background:#2e2e2e;"></div><div style="position:absolute;left:0px;top:178.1px;width:16.5px;height:1px;background:#2e2e2e;"></div><div style="position:absolute;left:0px;top:209.29999999999998px;width:16.5px;height:1px;background:#2e2e2e;"></div><div style="position:absolute;left:0px;top:240.5px;width:16.5px;height:1px;background:#2e2e2e;"></div><div style="position:absolute;left:0px;top:271.7px;width:16.5px;height:1px;background:#2e2e2e;"></div><div style="position:absolute;left:0px;top:302.9px;width:16.5px;height:1px;background:#2e2e2e;"></div><div style="position:absolute;left:0px;top:334.1px;width:16.5px;height:1px;background:#2e2e2e;"></div><div style="position:absolute;left:0px;top:365.29999999999995px;width:16.5px;height:1px;background:#2e2e2e;"></div><div style="position:absolute;left:0px;top:396.5px;width:16.5px;height:1px;background:#2e2e2e;"></div><div style="position:absolute;left:0px;top:427.7px;width:16.5px;height:1px;background:#2e2e2e;"></div><div style="position:absolute;left:0px;top:458.9px;width:16.5px;height:1px;background:#2e2e2e;"></div><div style="position:absolute;left:0px;top:470.7px;width:16.5px;height:1px;background:#2e2e2e;"></div><div style="position:absolute;left:16px;top:104px;width:0.6px;height:375px;background:#1a1a1a;"></div><div style="position:absolute;left:99.6px;top:463px;width:7px;height:7.4px;border:0.6px solid #b8b8b8;background:#fafafa"></div><svg style="position:absolute;left:101.2px;top:465.5px;" width="4" height="3" viewBox="0 0 4 3" fill="none"><path d="M0.3 0.5 H3.7 L2 2.5 Z" fill="#555"/></svg><div style="position:absolute;left:929.4px;top:104px;width:10.6px;height:375px;background:#0a0a0a;"></div><svg style="position:absolute;left:932px;top:109px;" width="6" height="4" viewBox="0 0 6 4" fill="none"><path d="M0.5 3.5 L3 0.5 L5.5 3.5 Z" fill="#9a9a9a"/></svg><div style="position:absolute;left:933px;top:115.5px;width:3.8px;height:10.7px;border-radius:2px;background:#8a8a8a"></div><svg style="position:absolute;left:932px;top:473.5px;" width="6" height="4" viewBox="0 0 6 4" fill="none"><path d="M0.5 0.5 L3 3.5 L5.5 0.5 Z" fill="#9a9a9a"/></svg><div style="position:absolute;left:0px;top:478.8px;width:940px;height:15px;background:#0a0a0a;"></div><svg style="position:absolute;left:12.7px;top:483.2px;" width="5" height="6" viewBox="0 0 5 6" fill="none"><path d="M3.8 0.8 L1.3 3 L3.8 5.2" stroke="#8a8a8a" stroke-width="0.8"/></svg><svg style="position:absolute;left:28.7px;top:483.2px;" width="5" height="6" viewBox="0 0 5 6" fill="none"><path d="M1.2 0.8 L3.7 3 L1.2 5.2" stroke="#8a8a8a" stroke-width="0.8"/></svg><div style="position:absolute;left:56.7px;top:478.3px;width:28px;height:13.8px;border-radius:0 0 2px 2px;background:linear-gradient(#ffffff 0%, #eaf4fa 55%, #bfe3f3 100%)"></div><div style="position:absolute;left:60.9px;top:489.3px;width:20px;height:1.1px;background:#3a9a5a;"></div><div style="position:absolute;left:89.2px;top:480.8px;width:30.4px;height:11.3px;border-radius:2px;background:#14a0d8"></div><div style="position:absolute;left:122.3px;top:482px;width:0.7px;height:9px;background:#2c2c2c;"></div><div style="position:absolute;left:124.5px;top:480.8px;width:32px;height:11.3px;border-radius:2px;background:#14a0d8"></div><div style="position:absolute;left:159.3px;top:482px;width:0.7px;height:9px;background:#2c2c2c;"></div><div style="position:absolute;left:161.5px;top:480.8px;width:30px;height:11.3px;border-radius:2px;background:#3a3a3a"></div><div style="position:absolute;left:194.1px;top:482px;width:0.7px;height:9px;background:#2c2c2c;"></div><div style="position:absolute;left:196.4px;top:480.8px;width:49.5px;height:11.3px;border-radius:2px;background:#ffffff"></div><svg style="position:absolute;left:204px;top:481.5px;" width="9" height="9" viewBox="0 0 9 9" fill="none"><path d="M2.5 8 C1 6.5 1 5 2.2 4.5 L3.2 5.2 V1.8 C3.2 1 4.3 1 4.3 1.8 V4 C5.5 3.6 7.5 4 7.5 5.5 V7 C7.5 8 6.8 8.5 6 8.5 Z" stroke="#2a2a2a" stroke-width="0.7"/><path d="M0.5 4.5 H1.8" stroke="#2a2a2a" stroke-width="0.6"/></svg><div style="position:absolute;left:248.5px;top:482px;width:0.7px;height:9px;background:#2c2c2c;"></div><svg style="position:absolute;left:256.5px;top:482.5px;" width="8" height="8" viewBox="0 0 8 8" fill="none"><circle cx="4" cy="4" r="3" fill="#a0a0a0"/><circle cx="4" cy="4" r="1.2" fill="#0a0a0a"/><circle cx="4" cy="4" r="3.7" stroke="#a0a0a0" stroke-width="0.8" stroke-dasharray="1.2 1"/></svg><div style="position:absolute;left:290.3px;top:482px;width:0.7px;height:9px;background:#2c2c2c;"></div><svg style="position:absolute;left:298.3px;top:482.5px;" width="9" height="8" viewBox="0 0 9 8" fill="none"><rect x="0.5" y="0.8" width="7.8" height="6.4" rx="3.2" fill="#c8c8c8"/><path d="M3.3 2.5 V5.5 M5.5 2.5 V5.5" stroke="#0a0a0a" stroke-width="0.8"/></svg><div style="position:absolute;left:353.5px;top:482px;width:0.7px;height:9px;background:#2c2c2c;"></div><svg style="position:absolute;left:361.8px;top:482.5px;" width="8" height="8" viewBox="0 0 8 8" fill="none"><rect x="0.6" y="0.6" width="6.8" height="6.8" rx="1" stroke="#c8c8c8" stroke-width="0.8"/><path d="M2.3 2.3 L5.7 5.7 M5.7 2.3 L2.3 5.7" stroke="#c8c8c8" stroke-width="0.7"/></svg><div style="position:absolute;left:408.6px;top:482px;width:0.7px;height:9px;background:#2c2c2c;"></div><svg style="position:absolute;left:417.8px;top:482px;" width="8" height="9" viewBox="0 0 8 9" fill="none"><path d="M1 3.5 H7 V8.2 H1 Z M2.3 3.5 V2.2 C2.3 0.5 5.7 0.5 5.7 2.2 V3.5" stroke="#c8c8c8" stroke-width="0.8"/><rect x="3.5" y="5" width="1" height="1.5" fill="#c8c8c8"/></svg><div style="position:absolute;left:467.2px;top:482px;width:0.7px;height:9px;background:#2c2c2c;"></div><svg style="position:absolute;left:476px;top:482.5px;" width="9" height="8" viewBox="0 0 9 8" fill="none"><circle cx="4.2" cy="4" r="3.8" fill="#c8c8c8"/><path d="M3 2 V6 M5.3 2 V6 M2 4 H6.5" stroke="#0a0a0a" stroke-width="0.6"/></svg><div style="position:absolute;left:531px;top:486.4px;width:5.5px;height:0.9px;background:#9a9a9a;"></div><svg style="position:absolute;left:546.5px;top:483.3px;" width="6" height="6" viewBox="0 0 6 6" fill="none"><path d="M3 0.3 V5.7 M0.3 3 H5.7" stroke="#9a9a9a" stroke-width="0.9"/></svg><svg style="position:absolute;left:564.5px;top:483px;" width="2" height="8" viewBox="0 0 2 8" fill="none"><circle cx="1" cy="1" r="0.5" fill="#8a8a8a"/><circle cx="1" cy="4" r="0.5" fill="#8a8a8a"/><circle cx="1" cy="7" r="0.5" fill="#8a8a8a"/></svg><svg style="position:absolute;left:576px;top:484px;" width="4" height="5" viewBox="0 0 4 5" fill="none"><path d="M3.5 0.5 L0.5 2.5 L3.5 4.5 Z" fill="#9a9a9a"/></svg><div style="position:absolute;left:581.6px;top:484px;width:147px;height:4.8px;border-radius:2.4px;background:#a2a2a2"></div><svg style="position:absolute;left:924px;top:484px;" width="4" height="5" viewBox="0 0 4 5" fill="none"><path d="M0.5 0.5 L3.5 2.5 L0.5 4.5 Z" fill="#9a9a9a"/></svg><div style="position:absolute;left:0px;top:493.5px;width:940px;height:11.5px;background:#161616;"></div><div style="position:absolute;left:0px;top:493.5px;width:940px;height:0.8px;background:#222222;"></div><svg style="position:absolute;left:30px;top:495.5px;" width="8" height="8" viewBox="0 0 8 8" fill="none"><circle cx="4" cy="1.6" r="1.1" stroke="#c8c8c8" stroke-width="0.7"/><path d="M0.8 3.3 H7.2 M4 3.3 V5.2 L2 7.5 M4 5.2 L6 7.5" stroke="#c8c8c8" stroke-width="0.8"/></svg><svg style="position:absolute;left:735px;top:495.5px;" width="8" height="8" viewBox="0 0 8 8" fill="none"><rect x="0.5" y="0.5" width="6.5" height="5" stroke="#c8c8c8" stroke-width="0.7"/><path d="M2 7.3 H5.5" stroke="#c8c8c8" stroke-width="0.7"/><circle cx="5.6" cy="5" r="1.6" fill="#c8c8c8"/></svg><div style="position:absolute;left:793.8px;top:494.6px;width:18.7px;height:10.4px;background:#262626;"></div><svg style="position:absolute;left:799px;top:496px;" width="8" height="8" viewBox="0 0 8 8" fill="none"><rect x="0.5" y="0.5" width="7" height="7" stroke="#cfcfcf" stroke-width="0.7"/><path d="M2.8 0.5 V7.5 M5.2 0.5 V7.5 M0.5 2.8 H7.5 M0.5 5.2 H7.5" stroke="#cfcfcf" stroke-width="0.6"/></svg><svg style="position:absolute;left:818px;top:496px;" width="8" height="8" viewBox="0 0 8 8" fill="none"><rect x="0.5" y="0.5" width="7" height="7" stroke="#bdbdbd" stroke-width="0.7"/><path d="M2.5 0.5 V7.5 M5.5 0.5 V7.5" stroke="#bdbdbd" stroke-width="0.7"/></svg><svg style="position:absolute;left:837.5px;top:496px;" width="8" height="8" viewBox="0 0 8 8" fill="none"><rect x="0.5" y="0.5" width="7" height="7" stroke="#bdbdbd" stroke-width="0.7"/><path d="M0.5 3 H7.5 M3 0.5 V3" stroke="#bdbdbd" stroke-width="0.7"/></svg><div style="position:absolute;left:854px;top:499.3px;width:3.5px;height:0.8px;background:#bdbdbd;"></div><div style="position:absolute;left:860.8px;top:499.4px;width:49.2px;height:0.6px;background:#8a8a8a;"></div><div style="position:absolute;left:886px;top:496.8px;width:2px;height:5.4px;background:#d0d0d0;"></div><svg style="position:absolute;left:912px;top:497px;" width="5" height="5" viewBox="0 0 5 5" fill="none"><path d="M2.5 0.3 V4.7 M0.3 2.5 H4.7" stroke="#bdbdbd" stroke-width="0.8"/></svg>
<div style="position:absolute;left:9.20px;top:10.00px;font:700 5.800px/5.800px 'Liberation Sans';color:#ffffff;white-space:pre;transform:scaleX(0.775);transform-origin:0 0;">X</div><div style="position:absolute;left:23.60px;top:10.00px;font:400 5.800px/5.800px 'Liberation Sans';color:#8f8f8f;white-space:pre;transform:scaleX(0.914);transform-origin:0 0;">AutoSave</div><div style="position:absolute;left:61.50px;top:10.00px;font:400 5.800px/5.800px 'Liberation Sans';color:#7a7a7a;white-space:pre;transform:scaleX(1.180);transform-origin:0 0;">Off</div><div style="position:absolute;left:151.00px;top:10.00px;font:400 5.800px/5.800px 'Liberation Sans';color:#8c8c8c;white-space:pre;transform:scaleX(0.975);transform-origin:0 0;">Water_quality_parameters.xlsx</div><div style="position:absolute;left:404.30px;top:10.00px;font:400 5.800px/5.800px 'Liberation Sans';color:#8a8a8a;white-space:pre;transform:scaleX(1.039);transform-origin:0 0;">Search</div><div style="position:absolute;left:10.60px;top:28.00px;font:400 6.600px/6.600px 'Liberation Sans';color:#e6e6e6;white-space:pre;transform:scaleX(0.865);transform-origin:0 0;">File</div><div style="position:absolute;left:33.00px;top:28.00px;font:700 6.600px/6.600px 'Liberation Sans';color:#e6e6e6;white-space:pre;transform:scaleX(0.982);transform-origin:0 0;">Home</div><div style="position:absolute;left:60.00px;top:28.00px;font:400 6.600px/6.600px 'Liberation Sans';color:#e6e6e6;white-space:pre;">Insert</div><div style="position:absolute;left:87.90px;top:28.00px;font:400 6.600px/6.600px 'Liberation Sans';color:#e6e6e6;white-space:pre;transform:scaleX(0.901);transform-origin:0 0;">Page Layout</div><div style="position:absolute;left:132.70px;top:28.00px;font:400 6.600px/6.600px 'Liberation Sans';color:#e6e6e6;white-space:pre;transform:scaleX(0.956);transform-origin:0 0;">Formulas</div><div style="position:absolute;left:168.90px;top:28.00px;font:400 6.600px/6.600px 'Liberation Sans';color:#e6e6e6;white-space:pre;transform:scaleX(0.940);transform-origin:0 0;">Data</div><div style="position:absolute;left:192.80px;top:28.00px;font:400 6.600px/6.600px 'Liberation Sans';color:#e6e6e6;white-space:pre;transform:scaleX(0.906);transform-origin:0 0;">Review</div><div style="position:absolute;left:222.00px;top:28.00px;font:400 6.600px/6.600px 'Liberation Sans';color:#e6e6e6;white-space:pre;transform:scaleX(0.959);transform-origin:0 0;">View</div><div style="position:absolute;left:246.40px;top:28.00px;font:400 6.600px/6.600px 'Liberation Sans';color:#e6e6e6;white-space:pre;transform:scaleX(0.959);transform-origin:0 0;">Automate</div><div style="position:absolute;left:284.70px;top:28.00px;font:400 6.600px/6.600px 'Liberation Sans';color:#e6e6e6;white-space:pre;transform:scaleX(0.936);transform-origin:0 0;">Help</div><div style="position:absolute;left:307.80px;top:28.00px;font:400 6.600px/6.600px 'Liberation Sans';color:#6fbf76;white-space:pre;transform:scaleX(0.949);transform-origin:0 0;">Table Design</div><div style="position:absolute;left:861.80px;top:28.00px;font:400 6.300px/6.300px 'Liberation Sans';color:#f2f2f2;white-space:pre;-webkit-text-stroke:0.15px #f2f2f2;">Comments</div><div style="position:absolute;left:910.50px;top:28.00px;font:400 6.300px/6.300px 'Liberation Sans';color:#0c1f12;white-space:pre;transform:scaleX(0.833);transform-origin:0 0;-webkit-text-stroke:0.2px #0c1f12;">Share</div><div style="position:absolute;left:13.30px;top:60.00px;font:400 6.500px/6.500px 'Liberation Sans';color:#ebebeb;white-space:pre;transform:scaleX(0.836);transform-origin:0 0;-webkit-text-stroke:0.1px #ebebeb;">Paste</div><div style="position:absolute;left:42.50px;top:44.00px;font:400 6.500px/6.500px 'Liberation Sans';color:#ebebeb;white-space:pre;transform:scaleX(1.018);transform-origin:0 0;-webkit-text-stroke:0.1px #ebebeb;">Cut</div><div style="position:absolute;left:42.90px;top:57.00px;font:400 6.500px/6.500px 'Liberation Sans';color:#ebebeb;white-space:pre;transform:scaleX(0.929);transform-origin:0 0;-webkit-text-stroke:0.1px #ebebeb;">Copy</div><div style="position:absolute;left:42.50px;top:69.00px;font:400 6.500px/6.500px 'Liberation Sans';color:#ebebeb;white-space:pre;transform:scaleX(0.905);transform-origin:0 0;-webkit-text-stroke:0.1px #ebebeb;">Format Painter</div><div style="position:absolute;left:31.50px;top:80.00px;font:400 6.500px/6.500px 'Liberation Sans';color:#ebebeb;white-space:pre;transform:scaleX(0.888);transform-origin:0 0;-webkit-text-stroke:0.1px #ebebeb;">Clipboard</div><div style="position:absolute;left:95.50px;top:47.00px;font:400 6.500px/6.500px 'Liberation Sans';color:#e8e8e8;white-space:pre;transform:scaleX(0.835);transform-origin:0 0;">Roboto</div><div style="position:absolute;left:154.00px;top:47.00px;font:400 6.500px/6.500px 'Liberation Sans';color:#e8e8e8;white-space:pre;transform:scaleX(0.830);transform-origin:0 0;">10</div><div style="position:absolute;left:179.00px;top:46.00px;font:400 8.300px/8.300px 'Liberation Sans';color:#d8d8d8;white-space:pre;transform:scaleX(1.138);transform-origin:0 0;">A</div><div style="position:absolute;left:192.60px;top:48.00px;font:400 6.600px/6.600px 'Liberation Sans';color:#d8d8d8;white-space:pre;transform:scaleX(1.113);transform-origin:0 0;">A</div><div style="position:absolute;left:97.50px;top:62.00px;font:700 8.000px/8.000px 'Liberation Sans';color:#d8d8d8;white-space:pre;transform:scaleX(0.727);transform-origin:0 0;">B</div><div style="position:absolute;left:110.50px;top:62.00px;font:400 8.000px/8.000px 'Liberation Sans';color:#d8d8d8;white-space:pre;transform:scaleX(1.754);transform-origin:0 0;font-style:italic">I</div><div style="position:absolute;left:122.00px;top:61.00px;font:400 7.000px/7.000px 'Liberation Sans';color:#d8d8d8;white-space:pre;transform:scaleX(0.989);transform-origin:0 0;">U</div><div style="position:absolute;left:185.30px;top:61.00px;font:400 7.200px/7.200px 'Liberation Sans';color:#d8d8d8;white-space:pre;transform:scaleX(1.291);transform-origin:0 0;">A</div><div style="position:absolute;left:137.90px;top:80.00px;font:400 6.500px/6.500px 'Liberation Sans';color:#ebebeb;white-space:pre;transform:scaleX(0.884);transform-origin:0 0;-webkit-text-stroke:0.1px #ebebeb;">Font</div><div style="position:absolute;left:291.20px;top:48.00px;font:400 6.500px/6.500px 'Liberation Sans';color:#ebebeb;white-space:pre;transform:scaleX(0.889);transform-origin:0 0;-webkit-text-stroke:0.1px #ebebeb;">Wrap Text</div><div style="position:absolute;left:291.90px;top:63.00px;font:400 6.500px/6.500px 'Liberation Sans';color:#6e6e6e;white-space:pre;transform:scaleX(0.907);transform-origin:0 0;">Merge &amp; Center</div><div style="position:absolute;left:261.80px;top:80.00px;font:400 6.500px/6.500px 'Liberation Sans';color:#ebebeb;white-space:pre;transform:scaleX(0.896);transform-origin:0 0;-webkit-text-stroke:0.1px #ebebeb;">Alignment</div><div style="position:absolute;left:358.50px;top:47.00px;font:400 6.500px/6.500px 'Liberation Sans';color:#e8e8e8;white-space:pre;transform:scaleX(0.843);transform-origin:0 0;">General</div><div style="position:absolute;left:378.70px;top:80.00px;font:400 6.500px/6.500px 'Liberation Sans';color:#ebebeb;white-space:pre;transform:scaleX(0.848);transform-origin:0 0;-webkit-text-stroke:0.1px #ebebeb;">Number</div><div style="position:absolute;left:439.10px;top:60.00px;font:400 6.500px/6.500px 'Liberation Sans';color:#ebebeb;white-space:pre;transform:scaleX(0.932);transform-origin:0 0;-webkit-text-stroke:0.1px #ebebeb;">Conditional</div><div style="position:absolute;left:437.40px;top:68.00px;font:400 6.500px/6.500px 'Liberation Sans';color:#ebebeb;white-space:pre;transform:scaleX(0.985);transform-origin:0 0;-webkit-text-stroke:0.1px #ebebeb;">Formatting</div><div style="position:absolute;left:474.50px;top:60.00px;font:400 6.500px/6.500px 'Liberation Sans';color:#ebebeb;white-space:pre;transform:scaleX(0.906);transform-origin:0 0;-webkit-text-stroke:0.1px #ebebeb;">Format as</div><div style="position:absolute;left:479.50px;top:68.00px;font:400 6.500px/6.500px 'Liberation Sans';color:#ebebeb;white-space:pre;transform:scaleX(0.837);transform-origin:0 0;-webkit-text-stroke:0.1px #ebebeb;">Table</div><div style="position:absolute;left:507.20px;top:49.00px;font:400 7.000px/7.000px 'Liberation Sans';color:#1f1f1f;white-space:pre;transform:scaleX(0.833);transform-origin:0 0;">Normal</div><div style="position:absolute;left:559.50px;top:49.00px;font:400 7.000px/7.000px 'Liberation Sans';color:#9c0006;white-space:pre;transform:scaleX(1.044);transform-origin:0 0;">Bad</div><div style="position:absolute;left:507.20px;top:62.00px;font:400 7.000px/7.000px 'Liberation Sans';color:#006100;white-space:pre;transform:scaleX(1.039);transform-origin:0 0;">Good</div><div style="position:absolute;left:559.50px;top:62.00px;font:400 7.000px/7.000px 'Liberation Sans';color:#9c5700;white-space:pre;transform:scaleX(0.953);transform-origin:0 0;">Neutral</div><div style="position:absolute;left:521.70px;top:80.00px;font:400 6.500px/6.500px 'Liberation Sans';color:#ebebeb;white-space:pre;transform:scaleX(0.819);transform-origin:0 0;-webkit-text-stroke:0.1px #ebebeb;">Styles</div><div style="position:absolute;left:631.30px;top:60.00px;font:400 6.500px/6.500px 'Liberation Sans';color:#ebebeb;white-space:pre;-webkit-text-stroke:0.1px #ebebeb;">Insert</div><div style="position:absolute;left:652.80px;top:60.00px;font:400 6.500px/6.500px 'Liberation Sans';color:#ebebeb;white-space:pre;transform:scaleX(0.905);transform-origin:0 0;-webkit-text-stroke:0.1px #ebebeb;">Delete</div><div style="position:absolute;left:673.20px;top:60.00px;font:400 6.500px/6.500px 'Liberation Sans';color:#ebebeb;white-space:pre;transform:scaleX(0.952);transform-origin:0 0;-webkit-text-stroke:0.1px #ebebeb;">Format</div><div style="position:absolute;left:655.70px;top:80.00px;font:400 6.500px/6.500px 'Liberation Sans';color:#ebebeb;white-space:pre;transform:scaleX(0.796);transform-origin:0 0;-webkit-text-stroke:0.1px #ebebeb;">Cells</div><div style="position:absolute;left:713.50px;top:44.00px;font:400 6.500px/6.500px 'Liberation Sans';color:#ebebeb;white-space:pre;transform:scaleX(0.913);transform-origin:0 0;-webkit-text-stroke:0.1px #ebebeb;">AutoSum</div><div style="position:absolute;left:713.50px;top:56.00px;font:400 6.500px/6.500px 'Liberation Sans';color:#ebebeb;white-space:pre;transform:scaleX(0.903);transform-origin:0 0;-webkit-text-stroke:0.1px #ebebeb;">Fill</div><div style="position:absolute;left:713.50px;top:69.00px;font:400 6.500px/6.500px 'Liberation Sans';color:#ebebeb;white-space:pre;transform:scaleX(0.856);transform-origin:0 0;-webkit-text-stroke:0.1px #ebebeb;">Clear</div><div style="position:absolute;left:741.30px;top:80.00px;font:400 6.500px/6.500px 'Liberation Sans';color:#ebebeb;white-space:pre;transform:scaleX(0.896);transform-origin:0 0;-webkit-text-stroke:0.1px #ebebeb;">Editing</div><div style="position:absolute;left:756.60px;top:60.00px;font:400 6.500px/6.500px 'Liberation Sans';color:#6e6e6e;white-space:pre;transform:scaleX(0.941);transform-origin:0 0;">Sort &amp;</div><div style="position:absolute;left:756.60px;top:68.00px;font:400 6.500px/6.500px 'Liberation Sans';color:#6e6e6e;white-space:pre;transform:scaleX(0.928);transform-origin:0 0;">Filter</div><div style="position:absolute;left:778.70px;top:60.00px;font:400 6.500px/6.500px 'Liberation Sans';color:#ebebeb;white-space:pre;transform:scaleX(0.953);transform-origin:0 0;-webkit-text-stroke:0.1px #ebebeb;">Find &amp;</div><div style="position:absolute;left:777.30px;top:68.00px;font:400 6.500px/6.500px 'Liberation Sans';color:#ebebeb;white-space:pre;transform:scaleX(0.841);transform-origin:0 0;-webkit-text-stroke:0.1px #ebebeb;">Select</div><div style="position:absolute;left:808.20px;top:60.00px;font:400 6.500px/6.500px 'Liberation Sans';color:#6e6e6e;white-space:pre;transform:scaleX(0.899);transform-origin:0 0;">Sensitivity</div><div style="position:absolute;left:808.00px;top:80.00px;font:400 6.500px/6.500px 'Liberation Sans';color:#ebebeb;white-space:pre;transform:scaleX(0.889);transform-origin:0 0;-webkit-text-stroke:0.1px #ebebeb;">Sensitivity</div><div style="position:absolute;left:844.30px;top:60.00px;font:400 6.500px/6.500px 'Liberation Sans';color:#ebebeb;white-space:pre;transform:scaleX(0.939);transform-origin:0 0;-webkit-text-stroke:0.1px #ebebeb;">Add-ins</div><div style="position:absolute;left:844.30px;top:80.00px;font:400 6.500px/6.500px 'Liberation Sans';color:#ebebeb;white-space:pre;transform:scaleX(0.939);transform-origin:0 0;-webkit-text-stroke:0.1px #ebebeb;">Add-ins</div><div style="position:absolute;left:875.00px;top:60.00px;font:400 6.500px/6.500px 'Liberation Sans';color:#ebebeb;white-space:pre;transform:scaleX(0.891);transform-origin:0 0;-webkit-text-stroke:0.1px #ebebeb;">Analyze</div><div style="position:absolute;left:880.30px;top:68.00px;font:400 6.500px/6.500px 'Liberation Sans';color:#ebebeb;white-space:pre;transform:scaleX(0.779);transform-origin:0 0;-webkit-text-stroke:0.1px #ebebeb;">Data</div><div style="position:absolute;left:7.20px;top:94.00px;font:400 7.000px/7.000px 'Liberation Sans';color:#dcdcdc;white-space:pre;transform:scaleX(0.851);transform-origin:0 0;">A13</div><div style="position:absolute;left:90.00px;top:93.00px;font:400 8.500px/8.500px 'Liberation Serif';color:#d8d8d8;white-space:pre;transform:scaleX(1.059);transform-origin:0 0;font-style:italic">fx</div><div style="position:absolute;left:54.45px;top:108.00px;font:400 9.000px/9.000px 'Liberation Sans';color:#bcbcbc;white-space:pre;">A</div><div style="position:absolute;left:129.70px;top:108.00px;font:400 9.000px/9.000px 'Liberation Sans';color:#bcbcbc;white-space:pre;">B</div><div style="position:absolute;left:205.35px;top:108.00px;font:400 9.000px/9.000px 'Liberation Sans';color:#bcbcbc;white-space:pre;">C</div><div style="position:absolute;left:285.25px;top:108.00px;font:400 9.000px/9.000px 'Liberation Sans';color:#bcbcbc;white-space:pre;">D</div><div style="position:absolute;left:347.70px;top:108.00px;font:400 9.000px/9.000px 'Liberation Sans';color:#bcbcbc;white-space:pre;">E</div><div style="position:absolute;left:402.95px;top:108.00px;font:400 9.000px/9.000px 'Liberation Sans';color:#bcbcbc;white-space:pre;">F</div><div style="position:absolute;left:460.00px;top:108.00px;font:400 9.000px/9.000px 'Liberation Sans';color:#bcbcbc;white-space:pre;">G</div><div style="position:absolute;left:513.35px;top:108.00px;font:400 9.000px/9.000px 'Liberation Sans';color:#bcbcbc;white-space:pre;">H</div><div style="position:absolute;left:568.65px;top:108.00px;font:400 9.000px/9.000px 'Liberation Sans';color:#bcbcbc;white-space:pre;">I</div><div style="position:absolute;left:639.05px;top:108.00px;font:400 9.000px/9.000px 'Liberation Sans';color:#bcbcbc;white-space:pre;">J</div><div style="position:absolute;left:715.00px;top:108.00px;font:400 9.000px/9.000px 'Liberation Sans';color:#bcbcbc;white-space:pre;">K</div><div style="position:absolute;left:774.85px;top:108.00px;font:400 9.000px/9.000px 'Liberation Sans';color:#bcbcbc;white-space:pre;">L</div><div style="position:absolute;left:834.45px;top:108.00px;font:400 9.000px/9.000px 'Liberation Sans';color:#bcbcbc;white-space:pre;">M</div><div style="position:absolute;left:897.40px;top:108.00px;font:400 9.000px/9.000px 'Liberation Sans';color:#bcbcbc;white-space:pre;">N</div><div style="position:absolute;left:6.65px;top:129.00px;font:400 8.500px/8.500px 'Liberation Sans';color:#c4c4c4;white-space:pre;transform:scaleX(0.825);transform-origin:0 0;">1</div><div style="position:absolute;left:6.65px;top:149.00px;font:400 8.500px/8.500px 'Liberation Sans';color:#c4c4c4;white-space:pre;transform:scaleX(0.825);transform-origin:0 0;">2</div><div style="position:absolute;left:6.65px;top:170.00px;font:400 8.500px/8.500px 'Liberation Sans';color:#c4c4c4;white-space:pre;transform:scaleX(0.825);transform-origin:0 0;">3</div><div style="position:absolute;left:6.65px;top:201.00px;font:400 8.500px/8.500px 'Liberation Sans';color:#c4c4c4;white-space:pre;transform:scaleX(0.825);transform-origin:0 0;">4</div><div style="position:absolute;left:6.65px;top:232.00px;font:400 8.500px/8.500px 'Liberation Sans';color:#c4c4c4;white-space:pre;transform:scaleX(0.825);transform-origin:0 0;">5</div><div style="position:absolute;left:6.65px;top:264.00px;font:400 8.500px/8.500px 'Liberation Sans';color:#c4c4c4;white-space:pre;transform:scaleX(0.825);transform-origin:0 0;">6</div><div style="position:absolute;left:6.65px;top:295.00px;font:400 8.500px/8.500px 'Liberation Sans';color:#c4c4c4;white-space:pre;transform:scaleX(0.825);transform-origin:0 0;">7</div><div style="position:absolute;left:6.65px;top:326.00px;font:400 8.500px/8.500px 'Liberation Sans';color:#c4c4c4;white-space:pre;transform:scaleX(0.825);transform-origin:0 0;">8</div><div style="position:absolute;left:6.65px;top:357.00px;font:400 8.500px/8.500px 'Liberation Sans';color:#c4c4c4;white-space:pre;transform:scaleX(0.825);transform-origin:0 0;">9</div><div style="position:absolute;left:4.70px;top:388.00px;font:400 8.500px/8.500px 'Liberation Sans';color:#c4c4c4;white-space:pre;transform:scaleX(0.825);transform-origin:0 0;">10</div><div style="position:absolute;left:4.70px;top:420.00px;font:400 8.500px/8.500px 'Liberation Sans';color:#c4c4c4;white-space:pre;transform:scaleX(0.884);transform-origin:0 0;">11</div><div style="position:absolute;left:4.70px;top:451.00px;font:400 8.500px/8.500px 'Liberation Sans';color:#c4c4c4;white-space:pre;transform:scaleX(0.825);transform-origin:0 0;">12</div><div style="position:absolute;left:4.70px;top:463.00px;font:400 8.500px/8.500px 'Liberation Sans';color:#c4c4c4;white-space:pre;transform:scaleX(0.825);transform-origin:0 0;">13</div><div style="position:absolute;left:4.70px;top:473.00px;font:400 8.500px/8.500px 'Liberation Sans';color:#c4c4c4;white-space:pre;transform:scaleX(0.825);transform-origin:0 0;">14</div><div style="position:absolute;left:60.90px;top:483.00px;font:400 6.800px/6.800px 'Liberation Sans';color:#262626;white-space:pre;">survey</div><div style="position:absolute;left:93.00px;top:484.00px;font:400 6.800px/6.800px 'Liberation Sans';color:#ffffff;white-space:pre;transform:scaleX(0.976);transform-origin:0 0;">choices</div><div style="position:absolute;left:127.50px;top:484.00px;font:400 6.800px/6.800px 'Liberation Sans';color:#ffffff;white-space:pre;transform:scaleX(1.097);transform-origin:0 0;">settings</div><div style="position:absolute;left:165.30px;top:484.00px;font:400 6.800px/6.800px 'Liberation Sans';color:#d8d8d8;white-space:pre;transform:scaleX(1.021);transform-origin:0 0;">entities</div><div style="position:absolute;left:213.70px;top:484.00px;font:400 6.800px/6.800px 'Liberation Sans';color:#1a1a1a;white-space:pre;">Start here</div><div style="position:absolute;left:267.30px;top:484.00px;font:400 6.800px/6.800px 'Liberation Sans';color:#c8c8c8;white-space:pre;transform:scaleX(0.954);transform-origin:0 0;">Types</div><div style="position:absolute;left:308.80px;top:484.00px;font:400 6.800px/6.800px 'Liberation Sans';color:#c8c8c8;white-space:pre;transform:scaleX(0.983);transform-origin:0 0;">Appearances</div><div style="position:absolute;left:372.40px;top:484.00px;font:400 6.800px/6.800px 'Liberation Sans';color:#c8c8c8;white-space:pre;transform:scaleX(0.946);transform-origin:0 0;">Relevance</div><div style="position:absolute;left:428.40px;top:484.00px;font:400 6.800px/6.800px 'Liberation Sans';color:#c8c8c8;white-space:pre;transform:scaleX(0.986);transform-origin:0 0;">Constraints</div><div style="position:absolute;left:487.20px;top:484.00px;font:400 6.800px/6.800px 'Liberation Sans';color:#c8c8c8;white-space:pre;transform:scaleX(0.968);transform-origin:0 0;">Translations</div><div style="position:absolute;left:5.50px;top:498.00px;font:400 5.800px/5.800px 'Liberation Sans';color:#d6d6d6;white-space:pre;transform:scaleX(0.948);transform-origin:0 0;-webkit-text-stroke:0.2px #d6d6d6;">Ready</div><div style="position:absolute;left:39.10px;top:498.00px;font:400 5.800px/5.800px 'Liberation Sans';color:#d6d6d6;white-space:pre;transform:scaleX(0.958);transform-origin:0 0;-webkit-text-stroke:0.2px #d6d6d6;">Accessibility: Investigate</div><div style="position:absolute;left:743.00px;top:498.00px;font:400 5.800px/5.800px 'Liberation Sans';color:#dedede;white-space:pre;transform:scaleX(0.969);transform-origin:0 0;-webkit-text-stroke:0.2px #dedede;">Display Settings</div><div style="position:absolute;left:922.70px;top:498.00px;font:400 5.800px/5.800px 'Liberation Sans';color:#d6d6d6;white-space:pre;transform:scaleX(0.917);transform-origin:0 0;-webkit-text-stroke:0.2px #d6d6d6;">120%</div><div style="position:absolute;left:18.10px;top:129px"><div style="position:absolute;left:0;top:0;font:700 8.000px/8.000px 'Liberation Sans';color:#1c1c1c;white-space:pre;transform:scaleX(0.940);transform-origin:0 0;-webkit-text-stroke:0.2px #1c1c1c">type</div></div><div style="position:absolute;left:100.00px;top:129px"><div style="position:absolute;left:0;top:0;font:700 8.000px/8.000px 'Liberation Sans';color:#1c1c1c;white-space:pre;transform:scaleX(0.940);transform-origin:0 0;-webkit-text-stroke:0.2px #1c1c1c">name</div></div><div style="position:absolute;left:168.60px;top:129px"><div style="position:absolute;left:0;top:0;font:700 8.000px/8.000px 'Liberation Sans';color:#1c1c1c;white-space:pre;transform:scaleX(0.940);transform-origin:0 0;-webkit-text-stroke:0.2px #1c1c1c">label</div></div><div style="position:absolute;left:251.80px;top:129px"><div style="position:absolute;left:0;top:0;font:700 8.000px/8.000px 'Liberation Sans';color:#1c1c1c;white-space:pre;transform:scaleX(0.940);transform-origin:0 0;-webkit-text-stroke:0.2px #1c1c1c">hint</div></div><div style="position:absolute;left:328.40px;top:129px"><div style="position:absolute;left:0;top:0;font:700 8.000px/8.000px 'Liberation Sans';color:#1c1c1c;white-space:pre;transform:scaleX(0.940);transform-origin:0 0;-webkit-text-stroke:0.2px #1c1c1c">required</div></div><div style="position:absolute;left:376.20px;top:129px"><div style="position:absolute;left:0;top:0;font:700 8.000px/8.000px 'Liberation Sans';color:#1c1c1c;white-space:pre;transform:scaleX(0.940);transform-origin:0 0;-webkit-text-stroke:0.2px #1c1c1c">relevant</div></div><div style="position:absolute;left:438.40px;top:129px"><div style="position:absolute;left:0;top:0;font:700 8.000px/8.000px 'Liberation Sans';color:#1c1c1c;white-space:pre;transform:scaleX(0.940);transform-origin:0 0;-webkit-text-stroke:0.2px #1c1c1c">appearance</div></div><div style="position:absolute;left:491.80px;top:129px"><div style="position:absolute;left:0;top:0;font:700 8.000px/8.000px 'Liberation Sans';color:#1c1c1c;white-space:pre;transform:scaleX(0.940);transform-origin:0 0;-webkit-text-stroke:0.2px #1c1c1c">default</div></div><div style="position:absolute;left:544.60px;top:129px"><div style="position:absolute;left:0;top:0;font:700 8.000px/8.000px 'Liberation Sans';color:#1c1c1c;white-space:pre;transform:scaleX(0.940);transform-origin:0 0;-webkit-text-stroke:0.2px #1c1c1c">constraint</div></div><div style="position:absolute;left:598.40px;top:129px"><div style="position:absolute;left:0;top:0;font:700 8.000px/8.000px 'Liberation Sans';color:#1c1c1c;white-space:pre;transform:scaleX(0.940);transform-origin:0 0;-webkit-text-stroke:0.2px #1c1c1c">constraint_message</div></div><div style="position:absolute;left:687.40px;top:129px"><div style="position:absolute;left:0;top:0;font:700 8.000px/8.000px 'Liberation Sans';color:#1c1c1c;white-space:pre;transform:scaleX(0.940);transform-origin:0 0;-webkit-text-stroke:0.2px #1c1c1c">calculation</div></div><div style="position:absolute;left:751.80px;top:129px"><div style="position:absolute;left:0;top:0;font:700 8.000px/8.000px 'Liberation Sans';color:#1c1c1c;white-space:pre;transform:scaleX(0.940);transform-origin:0 0;-webkit-text-stroke:0.2px #1c1c1c">trigger</div></div><div style="position:absolute;left:806.10px;top:129px"><div style="position:absolute;left:0;top:0;font:700 8.000px/8.000px 'Liberation Sans';color:#1c1c1c;white-space:pre;transform:scaleX(0.940);transform-origin:0 0;-webkit-text-stroke:0.2px #1c1c1c">choice_filter</div></div><div style="position:absolute;left:873.50px;top:129px"><div style="position:absolute;left:0;top:0;font:700 8.000px/8.000px 'Liberation Sans';color:#1c1c1c;white-space:pre;transform:scaleX(0.940);transform-origin:0 0;-webkit-text-stroke:0.2px #1c1c1c">parameters</div></div><div style="position:absolute;left:18.30px;top:142px;width:79.60px;height:14.3px;overflow:hidden"><div style="position:absolute;left:0;top:3px"><div style="position:absolute;left:0;top:0;font:400 8.300px/8.300px 'Liberation Sans';color:#222222;white-space:pre;transform:scaleX(0.935);transform-origin:0 0;">text</div></div></div><div style="position:absolute;left:100.60px;top:145px"><div style="position:absolute;left:0;top:0;font:400 8.100px/8.100px 'Liberation Mono';color:#383838;white-space:pre;">station_id</div></div><div style="position:absolute;left:168.80px;top:142px;width:80.90px;height:14.3px;overflow:hidden"><div style="position:absolute;left:0;top:3px"><div style="position:absolute;left:0;top:0;font:400 8.300px/8.300px 'Liberation Sans';color:#222222;white-space:pre;transform:scaleX(0.935);transform-origin:0 0;">What is the station ID?</div></div></div><div style="position:absolute;left:328.60px;top:142px;width:45.50px;height:14.3px;overflow:hidden"><div style="position:absolute;left:0;top:3px"><div style="position:absolute;left:0;top:0;font:400 8.300px/8.300px 'Liberation Sans';color:#222222;white-space:pre;transform:scaleX(0.935);transform-origin:0 0;">yes</div></div></div><div style="position:absolute;left:18.30px;top:163px;width:79.60px;height:14.3px;overflow:hidden"><div style="position:absolute;left:0;top:3px"><div style="position:absolute;left:0;top:0;font:400 8.300px/8.300px 'Liberation Sans';color:#222222;white-space:pre;transform:scaleX(0.935);transform-origin:0 0;">text</div></div></div><div style="position:absolute;left:100.60px;top:166px"><div style="position:absolute;left:0;top:0;font:400 8.100px/8.100px 'Liberation Mono';color:#383838;white-space:pre;">station_name</div></div><div style="position:absolute;left:168.80px;top:157px;width:80.90px;height:14.3px;overflow:hidden"><div style="position:absolute;left:0;top:3px"><div style="position:absolute;left:0;top:0;font:400 8.300px/8.300px 'Liberation Sans';color:#222222;white-space:pre;transform:scaleX(0.935);transform-origin:0 0;">What is the station</div></div></div><div style="position:absolute;left:168.80px;top:168px;width:80.90px;height:14.3px;overflow:hidden"><div style="position:absolute;left:0;top:3px"><div style="position:absolute;left:0;top:0;font:400 8.300px/8.300px 'Liberation Sans';color:#222222;white-space:pre;transform:scaleX(0.935);transform-origin:0 0;">name?</div></div></div><div style="position:absolute;left:18.30px;top:188px;width:79.60px;height:14.3px;overflow:hidden"><div style="position:absolute;left:0;top:3px"><div style="position:absolute;left:0;top:0;font:400 8.300px/8.300px 'Liberation Sans';color:#222222;white-space:pre;transform:scaleX(0.935);transform-origin:0 0;">geopoint</div></div></div><div style="position:absolute;left:100.60px;top:186px"><div style="position:absolute;left:0;top:0;font:400 8.100px/8.100px 'Liberation Mono';color:#383838;white-space:pre;">station_locat</div></div><div style="position:absolute;left:100.60px;top:197px"><div style="position:absolute;left:0;top:0;font:400 8.100px/8.100px 'Liberation Mono';color:#383838;white-space:pre;">ion</div></div><div style="position:absolute;left:168.80px;top:178px;width:80.90px;height:14.3px;overflow:hidden"><div style="position:absolute;left:0;top:3px"><div style="position:absolute;left:0;top:0;font:400 8.300px/8.300px 'Liberation Sans';color:#222222;white-space:pre;transform:scaleX(0.935);transform-origin:0 0;">What is the</div></div></div><div style="position:absolute;left:168.80px;top:188px;width:80.90px;height:14.3px;overflow:hidden"><div style="position:absolute;left:0;top:3px"><div style="position:absolute;left:0;top:0;font:400 8.300px/8.300px 'Liberation Sans';color:#222222;white-space:pre;transform:scaleX(0.935);transform-origin:0 0;">${station_name}&#x27;s</div></div></div><div style="position:absolute;left:168.80px;top:199px;width:80.90px;height:14.3px;overflow:hidden"><div style="position:absolute;left:0;top:3px"><div style="position:absolute;left:0;top:0;font:400 8.300px/8.300px 'Liberation Sans';color:#222222;white-space:pre;transform:scaleX(0.935);transform-origin:0 0;">location?</div></div></div><div style="position:absolute;left:328.60px;top:188px;width:45.50px;height:14.3px;overflow:hidden"><div style="position:absolute;left:0;top:3px"><div style="position:absolute;left:0;top:0;font:400 8.300px/8.300px 'Liberation Sans';color:#222222;white-space:pre;transform:scaleX(0.935);transform-origin:0 0;">yes</div></div></div><div style="position:absolute;left:18.30px;top:220px;width:79.60px;height:14.3px;overflow:hidden"><div style="position:absolute;left:0;top:3px"><div style="position:absolute;left:0;top:0;font:400 8.300px/8.300px 'Liberation Sans';color:#222222;white-space:pre;transform:scaleX(0.935);transform-origin:0 0;">select_multiple device</div></div></div><div style="position:absolute;left:100.60px;top:217px"><div style="position:absolute;left:0;top:0;font:400 8.100px/8.100px 'Liberation Mono';color:#383838;white-space:pre;">station_devic</div></div><div style="position:absolute;left:100.60px;top:228px"><div style="position:absolute;left:0;top:0;font:400 8.100px/8.100px 'Liberation Mono';color:#383838;white-space:pre;">e</div></div><div style="position:absolute;left:168.80px;top:209px;width:80.90px;height:14.3px;overflow:hidden"><div style="position:absolute;left:0;top:3px"><div style="position:absolute;left:0;top:0;font:400 8.300px/8.300px 'Liberation Sans';color:#222222;white-space:pre;transform:scaleX(0.935);transform-origin:0 0;">What measurement</div></div></div><div style="position:absolute;left:168.80px;top:219px;width:80.90px;height:14.3px;overflow:hidden"><div style="position:absolute;left:0;top:3px"><div style="position:absolute;left:0;top:0;font:400 8.300px/8.300px 'Liberation Sans';color:#222222;white-space:pre;transform:scaleX(0.935);transform-origin:0 0;">device did you</div></div></div><div style="position:absolute;left:168.80px;top:230px;width:80.90px;height:14.3px;overflow:hidden"><div style="position:absolute;left:0;top:3px"><div style="position:absolute;left:0;top:0;font:400 8.300px/8.300px 'Liberation Sans';color:#222222;white-space:pre;transform:scaleX(0.935);transform-origin:0 0;">choose?</div></div></div><div style="position:absolute;left:328.60px;top:220px;width:45.50px;height:14.3px;overflow:hidden"><div style="position:absolute;left:0;top:3px"><div style="position:absolute;left:0;top:0;font:400 8.300px/8.300px 'Liberation Sans';color:#222222;white-space:pre;transform:scaleX(0.935);transform-origin:0 0;">yes</div></div></div><div style="position:absolute;left:438.60px;top:220px;width:51.10px;height:14.3px;overflow:hidden"><div style="position:absolute;left:0;top:3px"><div style="position:absolute;left:0;top:0;font:400 8.300px/8.300px 'Liberation Sans';color:#222222;white-space:pre;transform:scaleX(0.935);transform-origin:0 0;">minimal</div></div></div><div style="position:absolute;left:18.30px;top:251px;width:79.60px;height:14.3px;overflow:hidden"><div style="position:absolute;left:0;top:3px"><div style="position:absolute;left:0;top:0;font:400 8.300px/8.300px 'Liberation Sans';color:#222222;white-space:pre;transform:scaleX(0.935);transform-origin:0 0;">integer</div></div></div><div style="position:absolute;left:100.60px;top:254px"><div style="position:absolute;left:0;top:0;font:400 8.100px/8.100px 'Liberation Mono';color:#383838;white-space:pre;">pH</div></div><div style="position:absolute;left:168.80px;top:251px;width:80.90px;height:14.3px;overflow:hidden"><div style="position:absolute;left:0;top:3px"><div style="position:absolute;left:0;top:0;font:400 8.300px/8.300px 'Liberation Sans';color:#222222;white-space:pre;transform:scaleX(0.935);transform-origin:0 0;">pH measurement in []:</div></div></div><div style="position:absolute;left:328.60px;top:251px;width:45.50px;height:14.3px;overflow:hidden"><div style="position:absolute;left:0;top:3px"><div style="position:absolute;left:0;top:0;font:400 8.300px/8.300px 'Liberation Sans';color:#222222;white-space:pre;transform:scaleX(0.935);transform-origin:0 0;">yes</div></div></div><div style="position:absolute;left:376.40px;top:245px;width:59.90px;height:14.3px;overflow:hidden"><div style="position:absolute;left:0;top:3px"><div style="position:absolute;left:0;top:0;font:400 8.300px/8.300px 'Liberation Sans';color:#222222;white-space:pre;transform:scaleX(0.935);transform-origin:0 0;">selected(${devic</div></div></div><div style="position:absolute;left:376.40px;top:256px;width:59.90px;height:14.3px;overflow:hidden"><div style="position:absolute;left:0;top:3px"><div style="position:absolute;left:0;top:0;font:400 8.300px/8.300px 'Liberation Sans';color:#222222;white-space:pre;transform:scaleX(0.892);transform-origin:0 0;">e}, &#x27;ph_ec_meter&#x27;)</div></div></div><div style="position:absolute;left:544.80px;top:245px;width:51.50px;height:14.3px;overflow:hidden"><div style="position:absolute;left:0;top:3px"><div style="position:absolute;left:0;top:0;font:400 8.300px/8.300px 'Liberation Sans';color:#222222;white-space:pre;transform:scaleX(0.935);transform-origin:0 0;">.&gt;=0 and</div></div></div><div style="position:absolute;left:544.80px;top:256px;width:51.50px;height:14.3px;overflow:hidden"><div style="position:absolute;left:0;top:3px"><div style="position:absolute;left:0;top:0;font:400 8.300px/8.300px 'Liberation Sans';color:#222222;white-space:pre;transform:scaleX(0.935);transform-origin:0 0;">.&lt;=14</div></div></div><div style="position:absolute;left:598.60px;top:245px;width:86.70px;height:14.3px;overflow:hidden"><div style="position:absolute;left:0;top:3px"><div style="position:absolute;left:0;top:0;font:400 8.300px/8.300px 'Liberation Sans';color:#222222;white-space:pre;transform:scaleX(0.935);transform-origin:0 0;">Must be between 0 and</div></div></div><div style="position:absolute;left:598.60px;top:256px;width:86.70px;height:14.3px;overflow:hidden"><div style="position:absolute;left:0;top:3px"><div style="position:absolute;left:0;top:0;font:400 8.300px/8.300px 'Liberation Sans';color:#222222;white-space:pre;transform:scaleX(0.935);transform-origin:0 0;">14</div></div></div><div style="position:absolute;left:18.30px;top:282px;width:79.60px;height:14.3px;overflow:hidden"><div style="position:absolute;left:0;top:3px"><div style="position:absolute;left:0;top:0;font:400 8.300px/8.300px 'Liberation Sans';color:#222222;white-space:pre;transform:scaleX(0.935);transform-origin:0 0;">decimal</div></div></div><div style="position:absolute;left:100.60px;top:285px"><div style="position:absolute;left:0;top:0;font:400 8.100px/8.100px 'Liberation Mono';color:#383838;white-space:pre;">ec</div></div><div style="position:absolute;left:168.80px;top:282px;width:80.90px;height:14.3px;overflow:hidden"><div style="position:absolute;left:0;top:3px"><div style="position:absolute;left:0;top:0;font:400 8.300px/8.300px 'Liberation Sans';color:#222222;white-space:pre;transform:scaleX(0.935);transform-origin:0 0;">EC measurement in []:</div></div></div><div style="position:absolute;left:328.60px;top:282px;width:45.50px;height:14.3px;overflow:hidden"><div style="position:absolute;left:0;top:3px"><div style="position:absolute;left:0;top:0;font:400 8.300px/8.300px 'Liberation Sans';color:#222222;white-space:pre;transform:scaleX(0.935);transform-origin:0 0;">yes</div></div></div><div style="position:absolute;left:376.40px;top:277px;width:59.90px;height:14.3px;overflow:hidden"><div style="position:absolute;left:0;top:3px"><div style="position:absolute;left:0;top:0;font:400 8.300px/8.300px 'Liberation Sans';color:#222222;white-space:pre;transform:scaleX(0.935);transform-origin:0 0;">selected(${devic</div></div></div><div style="position:absolute;left:376.40px;top:287px;width:59.90px;height:14.3px;overflow:hidden"><div style="position:absolute;left:0;top:3px"><div style="position:absolute;left:0;top:0;font:400 8.300px/8.300px 'Liberation Sans';color:#222222;white-space:pre;transform:scaleX(0.892);transform-origin:0 0;">e}, &#x27;ph_ec_meter&#x27;)</div></div></div><div style="position:absolute;left:544.80px;top:282px;width:51.50px;height:14.3px;overflow:hidden"><div style="position:absolute;left:0;top:3px"><div style="position:absolute;left:0;top:0;font:400 8.300px/8.300px 'Liberation Sans';color:#222222;white-space:pre;transform:scaleX(0.935);transform-origin:0 0;">.&gt;0</div></div></div><div style="position:absolute;left:598.60px;top:277px;width:86.70px;height:14.3px;overflow:hidden"><div style="position:absolute;left:0;top:3px"><div style="position:absolute;left:0;top:0;font:400 8.300px/8.300px 'Liberation Sans';color:#222222;white-space:pre;transform:scaleX(0.935);transform-origin:0 0;">Must be a positive</div></div></div><div style="position:absolute;left:598.60px;top:287px;width:86.70px;height:14.3px;overflow:hidden"><div style="position:absolute;left:0;top:3px"><div style="position:absolute;left:0;top:0;font:400 8.300px/8.300px 'Liberation Sans';color:#222222;white-space:pre;transform:scaleX(0.935);transform-origin:0 0;">number</div></div></div><div style="position:absolute;left:18.30px;top:313px;width:79.60px;height:14.3px;overflow:hidden"><div style="position:absolute;left:0;top:3px"><div style="position:absolute;left:0;top:0;font:400 8.300px/8.300px 'Liberation Sans';color:#222222;white-space:pre;transform:scaleX(0.935);transform-origin:0 0;">decimal</div></div></div><div style="position:absolute;left:100.60px;top:311px"><div style="position:absolute;left:0;top:0;font:400 8.100px/8.100px 'Liberation Mono';color:#383838;white-space:pre;">redoxpotentia</div></div><div style="position:absolute;left:100.60px;top:321px"><div style="position:absolute;left:0;top:0;font:400 8.100px/8.100px 'Liberation Mono';color:#383838;white-space:pre;">al</div></div><div style="position:absolute;left:168.80px;top:308px;width:80.90px;height:14.3px;overflow:hidden"><div style="position:absolute;left:0;top:3px"><div style="position:absolute;left:0;top:0;font:400 8.300px/8.300px 'Liberation Sans';color:#222222;white-space:pre;transform:scaleX(0.935);transform-origin:0 0;">Redoxpotentiaal</div></div></div><div style="position:absolute;left:168.80px;top:318px;width:80.90px;height:14.3px;overflow:hidden"><div style="position:absolute;left:0;top:3px"><div style="position:absolute;left:0;top:0;font:400 8.300px/8.300px 'Liberation Sans';color:#222222;white-space:pre;transform:scaleX(0.935);transform-origin:0 0;">measurement in []:</div></div></div><div style="position:absolute;left:328.60px;top:313px;width:45.50px;height:14.3px;overflow:hidden"><div style="position:absolute;left:0;top:3px"><div style="position:absolute;left:0;top:0;font:400 8.300px/8.300px 'Liberation Sans';color:#222222;white-space:pre;transform:scaleX(0.935);transform-origin:0 0;">yes</div></div></div><div style="position:absolute;left:376.40px;top:308px;width:59.90px;height:14.3px;overflow:hidden"><div style="position:absolute;left:0;top:3px"><div style="position:absolute;left:0;top:0;font:400 8.300px/8.300px 'Liberation Sans';color:#222222;white-space:pre;transform:scaleX(0.935);transform-origin:0 0;">selected(${devic</div></div></div><div style="position:absolute;left:376.40px;top:318px;width:59.90px;height:14.3px;overflow:hidden"><div style="position:absolute;left:0;top:3px"><div style="position:absolute;left:0;top:0;font:400 8.300px/8.300px 'Liberation Sans';color:#222222;white-space:pre;transform:scaleX(0.892);transform-origin:0 0;">e}, &#x27;ph_ec_meter&#x27;)</div></div></div><div style="position:absolute;left:544.80px;top:313px;width:51.50px;height:14.3px;overflow:hidden"><div style="position:absolute;left:0;top:3px"><div style="position:absolute;left:0;top:0;font:400 8.300px/8.300px 'Liberation Sans';color:#222222;white-space:pre;transform:scaleX(0.935);transform-origin:0 0;">.&gt;0</div></div></div><div style="position:absolute;left:598.60px;top:308px;width:86.70px;height:14.3px;overflow:hidden"><div style="position:absolute;left:0;top:3px"><div style="position:absolute;left:0;top:0;font:400 8.300px/8.300px 'Liberation Sans';color:#222222;white-space:pre;transform:scaleX(0.935);transform-origin:0 0;">Must be a positive</div></div></div><div style="position:absolute;left:598.60px;top:318px;width:86.70px;height:14.3px;overflow:hidden"><div style="position:absolute;left:0;top:3px"><div style="position:absolute;left:0;top:0;font:400 8.300px/8.300px 'Liberation Sans';color:#222222;white-space:pre;transform:scaleX(0.935);transform-origin:0 0;">number</div></div></div><div style="position:absolute;left:18.30px;top:344px;width:79.60px;height:14.3px;overflow:hidden"><div style="position:absolute;left:0;top:3px"><div style="position:absolute;left:0;top:0;font:400 8.300px/8.300px 'Liberation Sans';color:#222222;white-space:pre;transform:scaleX(0.935);transform-origin:0 0;">decimal</div></div></div><div style="position:absolute;left:100.60px;top:348px"><div style="position:absolute;left:0;top:0;font:400 8.100px/8.100px 'Liberation Mono';color:#383838;white-space:pre;">anion_cation</div></div><div style="position:absolute;left:168.80px;top:339px;width:80.90px;height:14.3px;overflow:hidden"><div style="position:absolute;left:0;top:3px"><div style="position:absolute;left:0;top:0;font:400 8.300px/8.300px 'Liberation Sans';color:#222222;white-space:pre;transform:scaleX(0.935);transform-origin:0 0;">Anionen en kationen</div></div></div><div style="position:absolute;left:168.80px;top:350px;width:80.90px;height:14.3px;overflow:hidden"><div style="position:absolute;left:0;top:3px"><div style="position:absolute;left:0;top:0;font:400 8.300px/8.300px 'Liberation Sans';color:#222222;white-space:pre;transform:scaleX(0.935);transform-origin:0 0;">measurement in []:</div></div></div><div style="position:absolute;left:252.00px;top:344px;width:74.30px;height:14.3px;overflow:hidden"><div style="position:absolute;left:0;top:3px"><div style="position:absolute;left:0;top:0;font:400 8.300px/8.300px 'Liberation Sans';color:#222222;white-space:pre;transform:scaleX(0.935);transform-origin:0 0;">Anionen en kationen v</div></div></div><div style="position:absolute;left:328.60px;top:344px;width:45.50px;height:14.3px;overflow:hidden"><div style="position:absolute;left:0;top:3px"><div style="position:absolute;left:0;top:0;font:400 8.300px/8.300px 'Liberation Sans';color:#222222;white-space:pre;transform:scaleX(0.935);transform-origin:0 0;">yes</div></div></div><div style="position:absolute;left:376.40px;top:339px;width:59.90px;height:14.3px;overflow:hidden"><div style="position:absolute;left:0;top:3px"><div style="position:absolute;left:0;top:0;font:400 8.300px/8.300px 'Liberation Sans';color:#222222;white-space:pre;transform:scaleX(0.935);transform-origin:0 0;">selected(${devic</div></div></div><div style="position:absolute;left:376.40px;top:350px;width:59.90px;height:14.3px;overflow:hidden"><div style="position:absolute;left:0;top:3px"><div style="position:absolute;left:0;top:0;font:400 8.300px/8.300px 'Liberation Sans';color:#222222;white-space:pre;transform:scaleX(0.935);transform-origin:0 0;">e}, &#x27;nitrate_stick&#x27;)</div></div></div><div style="position:absolute;left:544.80px;top:344px;width:51.50px;height:14.3px;overflow:hidden"><div style="position:absolute;left:0;top:3px"><div style="position:absolute;left:0;top:0;font:400 8.300px/8.300px 'Liberation Sans';color:#222222;white-space:pre;transform:scaleX(0.935);transform-origin:0 0;">.&gt;0</div></div></div><div style="position:absolute;left:598.60px;top:339px;width:86.70px;height:14.3px;overflow:hidden"><div style="position:absolute;left:0;top:3px"><div style="position:absolute;left:0;top:0;font:400 8.300px/8.300px 'Liberation Sans';color:#222222;white-space:pre;transform:scaleX(0.935);transform-origin:0 0;">Must be a positive</div></div></div><div style="position:absolute;left:598.60px;top:350px;width:86.70px;height:14.3px;overflow:hidden"><div style="position:absolute;left:0;top:3px"><div style="position:absolute;left:0;top:0;font:400 8.300px/8.300px 'Liberation Sans';color:#222222;white-space:pre;transform:scaleX(0.935);transform-origin:0 0;">number</div></div></div><div style="position:absolute;left:18.30px;top:376px;width:79.60px;height:14.3px;overflow:hidden"><div style="position:absolute;left:0;top:3px"><div style="position:absolute;left:0;top:0;font:400 8.300px/8.300px 'Liberation Sans';color:#222222;white-space:pre;transform:scaleX(0.935);transform-origin:0 0;">decimal</div></div></div><div style="position:absolute;left:100.60px;top:379px"><div style="position:absolute;left:0;top:0;font:400 8.100px/8.100px 'Liberation Mono';color:#383838;white-space:pre;">npoc</div></div><div style="position:absolute;left:168.80px;top:370px;width:80.90px;height:14.3px;overflow:hidden"><div style="position:absolute;left:0;top:3px"><div style="position:absolute;left:0;top:0;font:400 8.300px/8.300px 'Liberation Sans';color:#222222;white-space:pre;transform:scaleX(0.935);transform-origin:0 0;">NPOC measurement</div></div></div><div style="position:absolute;left:168.80px;top:381px;width:80.90px;height:14.3px;overflow:hidden"><div style="position:absolute;left:0;top:3px"><div style="position:absolute;left:0;top:0;font:400 8.300px/8.300px 'Liberation Sans';color:#222222;white-space:pre;transform:scaleX(0.935);transform-origin:0 0;">in []:</div></div></div><div style="position:absolute;left:252.00px;top:365px;width:74.30px;height:14.3px;overflow:hidden"><div style="position:absolute;left:0;top:3px"><div style="position:absolute;left:0;top:0;font:400 8.300px/8.300px 'Liberation Sans';color:#222222;white-space:pre;transform:scaleX(0.935);transform-origin:0 0;">Opgeloste</div></div></div><div style="position:absolute;left:252.00px;top:375px;width:74.30px;height:14.3px;overflow:hidden"><div style="position:absolute;left:0;top:3px"><div style="position:absolute;left:0;top:0;font:400 8.300px/8.300px 'Liberation Sans';color:#222222;white-space:pre;transform:scaleX(0.935);transform-origin:0 0;">organische stof en</div></div></div><div style="position:absolute;left:252.00px;top:386px;width:74.30px;height:14.3px;overflow:hidden"><div style="position:absolute;left:0;top:3px"><div style="position:absolute;left:0;top:0;font:400 8.300px/8.300px 'Liberation Sans';color:#222222;white-space:pre;transform:scaleX(0.935);transform-origin:0 0;">totaal N</div></div></div><div style="position:absolute;left:328.60px;top:376px;width:45.50px;height:14.3px;overflow:hidden"><div style="position:absolute;left:0;top:3px"><div style="position:absolute;left:0;top:0;font:400 8.300px/8.300px 'Liberation Sans';color:#222222;white-space:pre;transform:scaleX(0.935);transform-origin:0 0;">yes</div></div></div><div style="position:absolute;left:376.40px;top:370px;width:59.90px;height:14.3px;overflow:hidden"><div style="position:absolute;left:0;top:3px"><div style="position:absolute;left:0;top:0;font:400 8.300px/8.300px 'Liberation Sans';color:#222222;white-space:pre;transform:scaleX(0.935);transform-origin:0 0;">selected(${devic</div></div></div><div style="position:absolute;left:376.40px;top:381px;width:59.90px;height:14.3px;overflow:hidden"><div style="position:absolute;left:0;top:3px"><div style="position:absolute;left:0;top:0;font:400 8.300px/8.300px 'Liberation Sans';color:#222222;white-space:pre;transform:scaleX(0.935);transform-origin:0 0;">e}, &#x27;nitrate_stick&#x27;)</div></div></div><div style="position:absolute;left:544.80px;top:376px;width:51.50px;height:14.3px;overflow:hidden"><div style="position:absolute;left:0;top:3px"><div style="position:absolute;left:0;top:0;font:400 8.300px/8.300px 'Liberation Sans';color:#222222;white-space:pre;transform:scaleX(0.935);transform-origin:0 0;">.&gt;0</div></div></div><div style="position:absolute;left:598.60px;top:370px;width:86.70px;height:14.3px;overflow:hidden"><div style="position:absolute;left:0;top:3px"><div style="position:absolute;left:0;top:0;font:400 8.300px/8.300px 'Liberation Sans';color:#222222;white-space:pre;transform:scaleX(0.935);transform-origin:0 0;">Must be a positive</div></div></div><div style="position:absolute;left:598.60px;top:381px;width:86.70px;height:14.3px;overflow:hidden"><div style="position:absolute;left:0;top:3px"><div style="position:absolute;left:0;top:0;font:400 8.300px/8.300px 'Liberation Sans';color:#222222;white-space:pre;transform:scaleX(0.935);transform-origin:0 0;">number</div></div></div><div style="position:absolute;left:18.30px;top:407px;width:79.60px;height:14.3px;overflow:hidden"><div style="position:absolute;left:0;top:3px"><div style="position:absolute;left:0;top:0;font:400 8.300px/8.300px 'Liberation Sans';color:#222222;white-space:pre;transform:scaleX(0.935);transform-origin:0 0;">decimal</div></div></div><div style="position:absolute;left:100.60px;top:410px"><div style="position:absolute;left:0;top:0;font:400 8.100px/8.100px 'Liberation Mono';color:#383838;white-space:pre;">t_p</div></div><div style="position:absolute;left:168.80px;top:401px;width:80.90px;height:14.3px;overflow:hidden"><div style="position:absolute;left:0;top:3px"><div style="position:absolute;left:0;top:0;font:400 8.300px/8.300px 'Liberation Sans';color:#222222;white-space:pre;transform:scaleX(0.935);transform-origin:0 0;">Totaal P</div></div></div><div style="position:absolute;left:168.80px;top:412px;width:80.90px;height:14.3px;overflow:hidden"><div style="position:absolute;left:0;top:3px"><div style="position:absolute;left:0;top:0;font:400 8.300px/8.300px 'Liberation Sans';color:#222222;white-space:pre;transform:scaleX(0.935);transform-origin:0 0;">measurement in  []:</div></div></div><div style="position:absolute;left:328.60px;top:407px;width:45.50px;height:14.3px;overflow:hidden"><div style="position:absolute;left:0;top:3px"><div style="position:absolute;left:0;top:0;font:400 8.300px/8.300px 'Liberation Sans';color:#222222;white-space:pre;transform:scaleX(0.935);transform-origin:0 0;">yes</div></div></div><div style="position:absolute;left:376.40px;top:401px;width:59.90px;height:14.3px;overflow:hidden"><div style="position:absolute;left:0;top:3px"><div style="position:absolute;left:0;top:0;font:400 8.300px/8.300px 'Liberation Sans';color:#222222;white-space:pre;transform:scaleX(0.935);transform-origin:0 0;">selected(${devic</div></div></div><div style="position:absolute;left:376.40px;top:412px;width:59.90px;height:14.3px;overflow:hidden"><div style="position:absolute;left:0;top:3px"><div style="position:absolute;left:0;top:0;font:400 8.300px/8.300px 'Liberation Sans';color:#222222;white-space:pre;transform:scaleX(0.935);transform-origin:0 0;">e}, &#x27;nitrate_stick&#x27;)</div></div></div><div style="position:absolute;left:544.80px;top:407px;width:51.50px;height:14.3px;overflow:hidden"><div style="position:absolute;left:0;top:3px"><div style="position:absolute;left:0;top:0;font:400 8.300px/8.300px 'Liberation Sans';color:#222222;white-space:pre;transform:scaleX(0.935);transform-origin:0 0;">.&gt;0</div></div></div><div style="position:absolute;left:598.60px;top:401px;width:86.70px;height:14.3px;overflow:hidden"><div style="position:absolute;left:0;top:3px"><div style="position:absolute;left:0;top:0;font:400 8.300px/8.300px 'Liberation Sans';color:#222222;white-space:pre;transform:scaleX(0.935);transform-origin:0 0;">Must be a positive</div></div></div><div style="position:absolute;left:598.60px;top:412px;width:86.70px;height:14.3px;overflow:hidden"><div style="position:absolute;left:0;top:3px"><div style="position:absolute;left:0;top:0;font:400 8.300px/8.300px 'Liberation Sans';color:#222222;white-space:pre;transform:scaleX(0.935);transform-origin:0 0;">number</div></div></div><div style="position:absolute;left:18.30px;top:438px;width:79.60px;height:14.3px;overflow:hidden"><div style="position:absolute;left:0;top:3px"><div style="position:absolute;left:0;top:0;font:400 8.300px/8.300px 'Liberation Sans';color:#222222;white-space:pre;transform:scaleX(0.935);transform-origin:0 0;">image</div></div></div><div style="position:absolute;left:100.60px;top:436px"><div style="position:absolute;left:0;top:0;font:400 8.100px/8.100px 'Liberation Mono';color:#383838;white-space:pre;">station_front</div></div><div style="position:absolute;left:100.60px;top:446px"><div style="position:absolute;left:0;top:0;font:400 8.100px/8.100px 'Liberation Mono';color:#383838;white-space:pre;">_picture</div></div><div style="position:absolute;left:168.80px;top:427px;width:80.90px;height:14.3px;overflow:hidden"><div style="position:absolute;left:0;top:3px"><div style="position:absolute;left:0;top:0;font:400 8.300px/8.300px 'Liberation Sans';color:#222222;white-space:pre;transform:scaleX(0.935);transform-origin:0 0;">Take a picture of</div></div></div><div style="position:absolute;left:168.80px;top:438px;width:80.90px;height:14.3px;overflow:hidden"><div style="position:absolute;left:0;top:3px"><div style="position:absolute;left:0;top:0;font:400 8.300px/8.300px 'Liberation Sans';color:#222222;white-space:pre;transform:scaleX(0.935);transform-origin:0 0;">${station_name}</div></div></div><div style="position:absolute;left:168.80px;top:448px;width:80.90px;height:14.3px;overflow:hidden"><div style="position:absolute;left:0;top:3px"><div style="position:absolute;left:0;top:0;font:400 8.300px/8.300px 'Liberation Sans';color:#222222;white-space:pre;transform:scaleX(0.935);transform-origin:0 0;">station</div></div></div><div style="position:absolute;left:252.00px;top:433px;width:74.30px;height:14.3px;overflow:hidden"><div style="position:absolute;left:0;top:3px"><div style="position:absolute;left:0;top:0;font:400 8.300px/8.300px 'Liberation Sans';color:#222222;white-space:pre;transform:scaleX(0.935);transform-origin:0 0;">Include the station</div></div></div><div style="position:absolute;left:252.00px;top:443px;width:74.30px;height:14.3px;overflow:hidden"><div style="position:absolute;left:0;top:3px"><div style="position:absolute;left:0;top:0;font:400 8.300px/8.300px 'Liberation Sans';color:#222222;white-space:pre;transform:scaleX(0.935);transform-origin:0 0;">measurement</div></div></div><div style="position:absolute;left:328.60px;top:438px;width:45.50px;height:14.3px;overflow:hidden"><div style="position:absolute;left:0;top:3px"><div style="position:absolute;left:0;top:0;font:400 8.300px/8.300px 'Liberation Sans';color:#222222;white-space:pre;transform:scaleX(0.935);transform-origin:0 0;">yes</div></div></div><div style="position:absolute;left:873.70px;top:433px;width:55.20px;height:14.3px;overflow:hidden"><div style="position:absolute;left:0;top:3px"><div style="position:absolute;left:0;top:0;font:400 8.300px/8.300px 'Liberation Sans';color:#222222;white-space:pre;transform:scaleX(0.935);transform-origin:0 0;">max-</div></div></div><div style="position:absolute;left:873.70px;top:443px;width:55.20px;height:14.3px;overflow:hidden"><div style="position:absolute;left:0;top:3px"><div style="position:absolute;left:0;top:0;font:400 8.300px/8.300px 'Liberation Sans';color:#222222;white-space:pre;transform:scaleX(0.935);transform-origin:0 0;">pixels=1024</div></div></div>
</div></body></html>
